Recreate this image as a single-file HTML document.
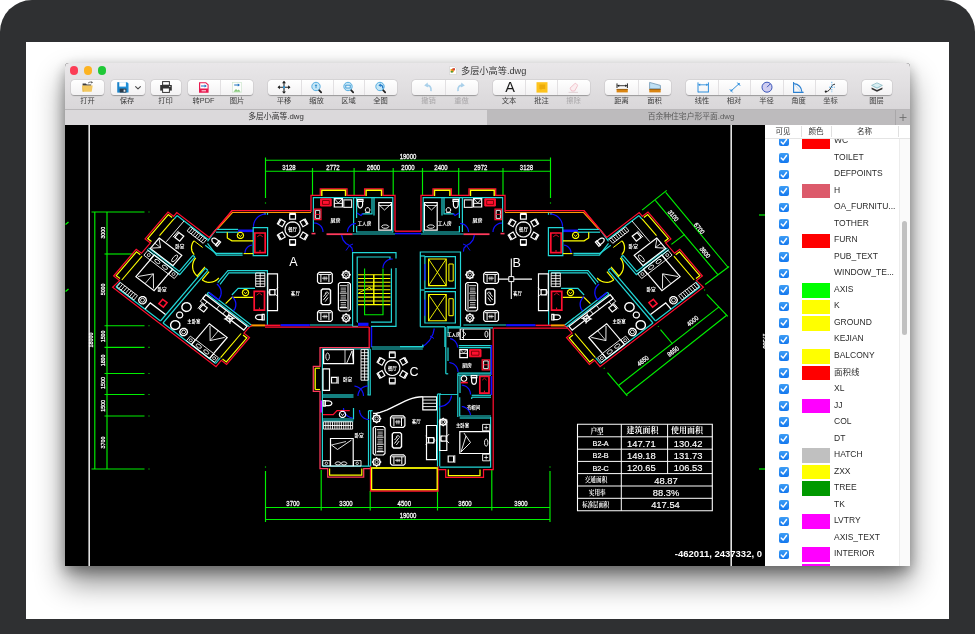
<!DOCTYPE html>
<html lang="zh"><head><meta charset="utf-8"><title>多层小高等.dwg</title>
<style>
html,body{margin:0;padding:0;}
body{width:975px;height:634px;overflow:hidden;background:#fff;position:relative;font-family:"Liberation Sans","Noto Sans CJK SC",sans-serif;}
#frame{position:absolute;left:0;top:0;width:975px;height:680px;background:#2f3032;border-radius:32px 32px 0 0;}
#screen{position:absolute;left:26px;top:42px;width:923px;height:577px;background:#fff;overflow:hidden;}
#win{position:absolute;left:39px;top:21px;width:845px;height:503px;background:#000;box-shadow:0 16px 30px rgba(0,0,0,.48),0 5px 14px rgba(0,0,0,.33);border-radius:4px 4px 0 0;}
#tbar{position:absolute;left:0;top:0;width:845px;height:46.5px;background:linear-gradient(#e9e7e9,#d9d7d9);border-radius:4px 4px 0 0;border-bottom:1px solid #b9b7b9;box-sizing:border-box;}
.tl{position:absolute;top:3.1px;width:8.6px;height:8.6px;border-radius:50%;}
#title{position:absolute;left:396px;top:2px;font-size:9.2px;color:#3a3a3a;white-space:nowrap;line-height:12px;}
.grp{position:absolute;top:17.4px;height:15px;background:linear-gradient(#fff,#f3f2f3);border-radius:3.5px;box-shadow:0 0.5px 1px rgba(0,0,0,.28),0 0 0 0.5px rgba(0,0,0,.07);}
.sep{position:absolute;top:0;width:1px;height:15px;background:#e2e0e2;}
.lab{position:absolute;top:32.7px;width:40px;margin-left:-20px;text-align:center;font-size:7.3px;line-height:10px;color:#3c3c3c;white-space:nowrap;}
.lab.dis{color:#a9a7a9;}
.ic{position:absolute;top:17px;width:16px;height:15px;margin-left:-8px;}
#tabs{position:absolute;left:0;top:46.5px;width:845px;height:14.9px;background:#bdbbbd;font-size:7.8px;line-height:14.5px;color:#333;}
#tab1{position:absolute;left:0;top:0;width:422px;height:15px;background:#dbd9db;text-align:center;}
#tab2{position:absolute;left:423px;top:0;width:406px;height:15px;text-align:center;color:#5a5a5a;}
#plus{position:absolute;left:830px;top:0;width:15px;height:15px;border-left:1px solid #a9a7a9;box-sizing:border-box;}
#canvas{position:absolute;left:0;top:61px;width:700px;height:442px;background:#000;overflow:hidden;}
#panel{position:absolute;left:700px;top:61px;width:145px;height:442px;background:#fff;overflow:hidden;}
#phead{position:absolute;left:0;top:0;width:145px;height:15px;background:#fff;border-bottom:1px solid #e4e4e4;box-sizing:border-box;font-size:7.5px;line-height:15px;color:#333;z-index:3;}
#phead span{position:absolute;top:0;text-align:center;}
.vs{position:absolute;top:2px;width:1px;height:11px;background:#e0e0e0;}
.row{position:absolute;left:0;width:145px;height:16.5px;}
.cb{position:absolute;left:14px;top:4.4px;width:9.6px;height:9.6px;border-radius:2px;background:linear-gradient(#3d9df5,#1478ee);}
.cb svg{position:absolute;left:0;top:0;width:9.6px;height:9.6px;}
.sw{position:absolute;left:37px;top:2.2px;width:28px;height:14.5px;}
.nm{position:absolute;left:69px;top:0;font-size:8.5px;line-height:16.5px;color:#2b2b2b;white-space:nowrap;}
#sb{position:absolute;left:136.8px;top:97.3px;width:5.5px;height:113.7px;border-radius:3px;background:#c1c1c1;z-index:4;}
#trk{position:absolute;left:134.4px;top:15px;width:10.6px;height:427px;background:#fafafa;border-left:1px solid #ececec;box-sizing:border-box;z-index:2;}
#coord{position:absolute;right:3px;top:424px;font-size:9.5px;font-weight:bold;color:#fff;white-space:nowrap;line-height:12px;}
.ic2{position:absolute;top:17.4px;width:20px;height:15px;}
#win,#tbar,#tabs,#panel,#canvas{will-change:transform;}

</style></head>
<body>
<div id="frame"></div>
<div id="screen">
<div id="win">
 <div id="canvas">
<svg id="cad" width="700" height="442" viewBox="65 124 700 442" style="position:absolute;left:0;top:0" fill="none" stroke-linecap="butt" stroke-linejoin="miter">
<path d="M89.2 124.0 L89.2 566.0" stroke="#e2e2e2" stroke-width="1.6" fill="none"/>
<path d="M731.2 124.0 L731.2 566.0" stroke="#e2e2e2" stroke-width="1.6" fill="none"/>
<path d="M65.5 224.5 L68.5 222.0" stroke="#00f000" stroke-width="1.4" fill="none"/>
<path d="M65.5 291.5 L68.5 289.0" stroke="#00f000" stroke-width="1.4" fill="none"/>
<path d="M759.0 215.0 L765.0 215.0" stroke="#00f000" stroke-width="1.2" fill="none"/>
<path d="M759.0 469.0 L765.0 469.0" stroke="#00f000" stroke-width="1.2" fill="none"/>
<text transform="translate(762.6 341.0) rotate(90)" font-size="5.4" fill="#ffffff" text-anchor="middle" font-family='"Liberation Sans","Noto Sans CJK SC",sans-serif' stroke="#ffffff" stroke-width="0.2">17500</text>
<path d="M265.5 160.2 L550.5 160.2" stroke="#00f000" stroke-width="1.15" fill="none"/>
<path d="M265.5 171.2 L550.5 171.2" stroke="#00f000" stroke-width="1.15" fill="none"/>
<path d="M265.5 157.5 L265.5 198.0" stroke="#00f000" stroke-width="1.15" fill="none"/>
<path d="M265.5 202.5 L265.5 203.5" stroke="#00f000" stroke-width="1.15" fill="none"/>
<path d="M550.5 157.5 L550.5 198.0" stroke="#00f000" stroke-width="1.15" fill="none"/>
<path d="M550.5 202.5 L550.5 203.5" stroke="#00f000" stroke-width="1.15" fill="none"/>
<path d="M312.5 168.0 L312.5 195.0" stroke="#00f000" stroke-width="1.15" fill="none"/>
<path d="M354.1 168.0 L354.1 195.0" stroke="#00f000" stroke-width="1.15" fill="none"/>
<path d="M393.2 168.0 L393.2 195.0" stroke="#00f000" stroke-width="1.15" fill="none"/>
<path d="M422.5 168.0 L422.5 195.0" stroke="#00f000" stroke-width="1.15" fill="none"/>
<path d="M458.7 168.0 L458.7 195.0" stroke="#00f000" stroke-width="1.15" fill="none"/>
<path d="M503.0 168.0 L503.0 195.0" stroke="#00f000" stroke-width="1.15" fill="none"/>
<text transform="translate(289.0 169.8) scale(0.86 1)" font-size="7.0" fill="#ffffff" text-anchor="middle" font-family='"Liberation Sans","Noto Sans CJK SC",sans-serif' stroke="#ffffff" stroke-width="0.25">3128</text>
<text transform="translate(333.0 169.8) scale(0.86 1)" font-size="7.0" fill="#ffffff" text-anchor="middle" font-family='"Liberation Sans","Noto Sans CJK SC",sans-serif' stroke="#ffffff" stroke-width="0.25">2772</text>
<text transform="translate(373.5 169.8) scale(0.86 1)" font-size="7.0" fill="#ffffff" text-anchor="middle" font-family='"Liberation Sans","Noto Sans CJK SC",sans-serif' stroke="#ffffff" stroke-width="0.25">2600</text>
<text transform="translate(408.0 169.8) scale(0.86 1)" font-size="7.0" fill="#ffffff" text-anchor="middle" font-family='"Liberation Sans","Noto Sans CJK SC",sans-serif' stroke="#ffffff" stroke-width="0.25">2000</text>
<text transform="translate(441.0 169.8) scale(0.86 1)" font-size="7.0" fill="#ffffff" text-anchor="middle" font-family='"Liberation Sans","Noto Sans CJK SC",sans-serif' stroke="#ffffff" stroke-width="0.25">2400</text>
<text transform="translate(480.7 169.8) scale(0.86 1)" font-size="7.0" fill="#ffffff" text-anchor="middle" font-family='"Liberation Sans","Noto Sans CJK SC",sans-serif' stroke="#ffffff" stroke-width="0.25">2972</text>
<text transform="translate(526.5 169.8) scale(0.86 1)" font-size="7.0" fill="#ffffff" text-anchor="middle" font-family='"Liberation Sans","Noto Sans CJK SC",sans-serif' stroke="#ffffff" stroke-width="0.25">3128</text>
<text transform="translate(408.0 158.6) scale(0.86 1)" font-size="7.0" fill="#ffffff" text-anchor="middle" font-family='"Liberation Sans","Noto Sans CJK SC",sans-serif' stroke="#ffffff" stroke-width="0.25">19000</text>
<path d="M265.5 507.5 L550.0 507.5" stroke="#00f000" stroke-width="1.15" fill="none"/>
<path d="M265.5 519.5 L550.0 519.5" stroke="#00f000" stroke-width="1.15" fill="none"/>
<path d="M265.5 471.0 L265.5 522.0" stroke="#00f000" stroke-width="1.15" fill="none"/>
<path d="M265.5 466.5 L265.5 467.5" stroke="#00f000" stroke-width="1.15" fill="none"/>
<path d="M550.0 471.0 L550.0 522.0" stroke="#00f000" stroke-width="1.15" fill="none"/>
<path d="M550.0 466.5 L550.0 467.5" stroke="#00f000" stroke-width="1.15" fill="none"/>
<path d="M321.2 470.0 L321.2 510.5" stroke="#00f000" stroke-width="1.15" fill="none"/>
<path d="M370.2 491.0 L370.2 510.5" stroke="#00f000" stroke-width="1.15" fill="none"/>
<path d="M437.5 491.0 L437.5 510.5" stroke="#00f000" stroke-width="1.15" fill="none"/>
<path d="M491.8 470.0 L491.8 510.5" stroke="#00f000" stroke-width="1.15" fill="none"/>
<text transform="translate(293.0 505.8) scale(0.86 1)" font-size="7.0" fill="#ffffff" text-anchor="middle" font-family='"Liberation Sans","Noto Sans CJK SC",sans-serif' stroke="#ffffff" stroke-width="0.25">3700</text>
<text transform="translate(346.0 505.8) scale(0.86 1)" font-size="7.0" fill="#ffffff" text-anchor="middle" font-family='"Liberation Sans","Noto Sans CJK SC",sans-serif' stroke="#ffffff" stroke-width="0.25">3300</text>
<text transform="translate(404.3 505.8) scale(0.86 1)" font-size="7.0" fill="#ffffff" text-anchor="middle" font-family='"Liberation Sans","Noto Sans CJK SC",sans-serif' stroke="#ffffff" stroke-width="0.25">4500</text>
<text transform="translate(465.0 505.8) scale(0.86 1)" font-size="7.0" fill="#ffffff" text-anchor="middle" font-family='"Liberation Sans","Noto Sans CJK SC",sans-serif' stroke="#ffffff" stroke-width="0.25">3600</text>
<text transform="translate(521.0 505.8) scale(0.86 1)" font-size="7.0" fill="#ffffff" text-anchor="middle" font-family='"Liberation Sans","Noto Sans CJK SC",sans-serif' stroke="#ffffff" stroke-width="0.25">3900</text>
<text transform="translate(408.0 517.6) scale(0.86 1)" font-size="7.0" fill="#ffffff" text-anchor="middle" font-family='"Liberation Sans","Noto Sans CJK SC",sans-serif' stroke="#ffffff" stroke-width="0.25">19000</text>
<path d="M94.8 212.0 L94.8 469.0" stroke="#00f000" stroke-width="1.15" fill="none"/>
<path d="M107.0 212.0 L107.0 469.0" stroke="#00f000" stroke-width="1.15" fill="none"/>
<path d="M91.5 212.0 L144.5 212.0" stroke="#00f000" stroke-width="1.15" fill="none"/>
<path d="M148.5 212.0 L149.5 212.0" stroke="#00f000" stroke-width="1.15" fill="none"/>
<path d="M104.5 254.0 L133.5 254.0" stroke="#00f000" stroke-width="1.15" fill="none"/>
<path d="M104.5 325.7 L144.5 325.7" stroke="#00f000" stroke-width="1.15" fill="none"/>
<path d="M148.5 325.7 L149.5 325.7" stroke="#00f000" stroke-width="1.15" fill="none"/>
<path d="M104.5 347.3 L144.5 347.3" stroke="#00f000" stroke-width="1.15" fill="none"/>
<path d="M148.5 347.3 L149.5 347.3" stroke="#00f000" stroke-width="1.15" fill="none"/>
<path d="M104.5 373.5 L144.5 373.5" stroke="#00f000" stroke-width="1.15" fill="none"/>
<path d="M148.5 373.5 L149.5 373.5" stroke="#00f000" stroke-width="1.15" fill="none"/>
<path d="M104.5 394.5 L144.5 394.5" stroke="#00f000" stroke-width="1.15" fill="none"/>
<path d="M148.5 394.5 L149.5 394.5" stroke="#00f000" stroke-width="1.15" fill="none"/>
<path d="M104.5 416.0 L144.5 416.0" stroke="#00f000" stroke-width="1.15" fill="none"/>
<path d="M148.5 416.0 L149.5 416.0" stroke="#00f000" stroke-width="1.15" fill="none"/>
<path d="M91.5 469.0 L144.5 469.0" stroke="#00f000" stroke-width="1.15" fill="none"/>
<path d="M148.5 469.0 L149.5 469.0" stroke="#00f000" stroke-width="1.15" fill="none"/>
<text transform="translate(105.2 232.7) rotate(-90) scale(0.86 1)" font-size="6.2" fill="#ffffff" text-anchor="middle" font-family='"Liberation Sans","Noto Sans CJK SC",sans-serif' stroke="#ffffff" stroke-width="0.25">3000</text>
<text transform="translate(105.2 289.4) rotate(-90) scale(0.86 1)" font-size="6.2" fill="#ffffff" text-anchor="middle" font-family='"Liberation Sans","Noto Sans CJK SC",sans-serif' stroke="#ffffff" stroke-width="0.25">5000</text>
<text transform="translate(105.2 336.4) rotate(-90) scale(0.86 1)" font-size="6.2" fill="#ffffff" text-anchor="middle" font-family='"Liberation Sans","Noto Sans CJK SC",sans-serif' stroke="#ffffff" stroke-width="0.25">1500</text>
<text transform="translate(105.2 360.4) rotate(-90) scale(0.86 1)" font-size="6.2" fill="#ffffff" text-anchor="middle" font-family='"Liberation Sans","Noto Sans CJK SC",sans-serif' stroke="#ffffff" stroke-width="0.25">1800</text>
<text transform="translate(105.2 383.0) rotate(-90) scale(0.86 1)" font-size="6.2" fill="#ffffff" text-anchor="middle" font-family='"Liberation Sans","Noto Sans CJK SC",sans-serif' stroke="#ffffff" stroke-width="0.25">1500</text>
<text transform="translate(105.2 405.9) rotate(-90) scale(0.86 1)" font-size="6.2" fill="#ffffff" text-anchor="middle" font-family='"Liberation Sans","Noto Sans CJK SC",sans-serif' stroke="#ffffff" stroke-width="0.25">1500</text>
<text transform="translate(105.2 442.5) rotate(-90) scale(0.86 1)" font-size="6.2" fill="#ffffff" text-anchor="middle" font-family='"Liberation Sans","Noto Sans CJK SC",sans-serif' stroke="#ffffff" stroke-width="0.25">3700</text>
<text transform="translate(93.0 340.0) rotate(-90) scale(0.86 1)" font-size="6.2" fill="#ffffff" text-anchor="middle" font-family='"Liberation Sans","Noto Sans CJK SC",sans-serif' stroke="#ffffff" stroke-width="0.25">18000</text>
<path d="M642.1 210.1 L666.7 190.4" stroke="#00f000" stroke-width="1.15" fill="none"/>
<path d="M655.3 200.3 L717.8 274.7" stroke="#00f000" stroke-width="1.15" fill="none"/>
<path d="M665.7 192.3 L728.2 267.5" stroke="#00f000" stroke-width="1.15" fill="none"/>
<path d="M671.4 244.4 L684.6 234.4" stroke="#00f000" stroke-width="1.15" fill="none"/>
<path d="M705.1 284.5 L729.1 266.5" stroke="#00f000" stroke-width="1.15" fill="none"/>
<text transform="translate(671.4 217.0) rotate(50) scale(0.86 1)" font-size="6.6" fill="#ffffff" text-anchor="middle" font-family='"Liberation Sans","Noto Sans CJK SC",sans-serif' stroke="#ffffff" stroke-width="0.25">3100</text>
<text transform="translate(697.5 229.9) rotate(50) scale(0.86 1)" font-size="6.6" fill="#ffffff" text-anchor="middle" font-family='"Liberation Sans","Noto Sans CJK SC",sans-serif' stroke="#ffffff" stroke-width="0.25">6700</text>
<text transform="translate(703.2 253.9) rotate(50) scale(0.86 1)" font-size="6.6" fill="#ffffff" text-anchor="middle" font-family='"Liberation Sans","Noto Sans CJK SC",sans-serif' stroke="#ffffff" stroke-width="0.25">3600</text>
<path d="M706.8 294.4 L727.8 316.4" stroke="#00f000" stroke-width="1.15" fill="none"/>
<path d="M704.3 289.7 L704.9 290.3" stroke="#00f000" stroke-width="1.15" fill="none"/>
<path d="M719.0 306.9 L618.5 385.5" stroke="#00f000" stroke-width="1.15" fill="none"/>
<path d="M726.7 315.3 L626.2 394.8" stroke="#00f000" stroke-width="1.15" fill="none"/>
<path d="M660.5 329.7 L672.6 344.0" stroke="#00f000" stroke-width="1.15" fill="none"/>
<path d="M658.0 326.1 L658.6 326.7" stroke="#00f000" stroke-width="1.15" fill="none"/>
<path d="M607.5 372.7 L627.3 395.9" stroke="#00f000" stroke-width="1.15" fill="none"/>
<path d="M603.9 368.0 L604.5 368.6" stroke="#00f000" stroke-width="1.15" fill="none"/>
<text transform="translate(694.0 322.8) rotate(-38) scale(0.86 1)" font-size="6.6" fill="#ffffff" text-anchor="middle" font-family='"Liberation Sans","Noto Sans CJK SC",sans-serif' stroke="#ffffff" stroke-width="0.25">4000</text>
<text transform="translate(644.3 362.6) rotate(-38) scale(0.86 1)" font-size="6.6" fill="#ffffff" text-anchor="middle" font-family='"Liberation Sans","Noto Sans CJK SC",sans-serif' stroke="#ffffff" stroke-width="0.25">4650</text>
<text transform="translate(674.5 353.1) rotate(-38) scale(0.86 1)" font-size="6.6" fill="#ffffff" text-anchor="middle" font-family='"Liberation Sans","Noto Sans CJK SC",sans-serif' stroke="#ffffff" stroke-width="0.25">8650</text>
<path d="M577.5 424.3 L712.3 424.3 L712.3 510.8 L577.5 510.8 Z" stroke="#ffffff" stroke-width="1.1" fill="none"/>
<path d="M577.5 436.8 L712.3 436.8" stroke="#ffffff" stroke-width="1.0" fill="none"/>
<path d="M577.5 449.2 L712.3 449.2" stroke="#ffffff" stroke-width="1.0" fill="none"/>
<path d="M577.5 461.4 L712.3 461.4" stroke="#ffffff" stroke-width="1.0" fill="none"/>
<path d="M577.5 473.6 L712.3 473.6" stroke="#ffffff" stroke-width="1.0" fill="none"/>
<path d="M577.5 486.0 L712.3 486.0" stroke="#ffffff" stroke-width="1.0" fill="none"/>
<path d="M577.5 498.3 L712.3 498.3" stroke="#ffffff" stroke-width="1.0" fill="none"/>
<path d="M621.3 424.3 L621.3 510.8" stroke="#ffffff" stroke-width="1.0" fill="none"/>
<path d="M667.6 424.3 L667.6 473.6" stroke="#ffffff" stroke-width="1.0" fill="none"/>
<text transform="translate(597.0 433.5) scale(0.8 1)" font-size="8.2" fill="#ffffff" text-anchor="middle" font-family='"Noto Serif CJK SC","Noto Sans CJK SC",serif' font-weight="bold">户型</text>
<text transform="translate(642.5 433.4)" font-size="8" fill="#ffffff" text-anchor="middle" font-family='"Noto Serif CJK SC","Noto Sans CJK SC",serif' font-weight="bold">建筑面积</text>
<text transform="translate(687.0 433.4)" font-size="8" fill="#ffffff" text-anchor="middle" font-family='"Noto Serif CJK SC","Noto Sans CJK SC",serif' font-weight="bold">使用面积</text>
<text transform="translate(600.6 446.0)" font-size="7.2" fill="#ffffff" text-anchor="middle" font-family='"Liberation Sans","Noto Sans CJK SC",sans-serif' stroke="#ffffff" stroke-width="0.2">B2-A</text>
<text transform="translate(641.3 446.8)" font-size="9.4" fill="#ffffff" text-anchor="middle" font-family='"Liberation Sans","Noto Sans CJK SC",sans-serif' stroke="#ffffff" stroke-width="0.15">147.71</text>
<text transform="translate(688.2 446.8)" font-size="9.4" fill="#ffffff" text-anchor="middle" font-family='"Liberation Sans","Noto Sans CJK SC",sans-serif' stroke="#ffffff" stroke-width="0.15">130.42</text>
<text transform="translate(600.6 458.3)" font-size="7.2" fill="#ffffff" text-anchor="middle" font-family='"Liberation Sans","Noto Sans CJK SC",sans-serif' stroke="#ffffff" stroke-width="0.2">B2-B</text>
<text transform="translate(641.3 459.1)" font-size="9.4" fill="#ffffff" text-anchor="middle" font-family='"Liberation Sans","Noto Sans CJK SC",sans-serif' stroke="#ffffff" stroke-width="0.15">149.18</text>
<text transform="translate(688.2 459.1)" font-size="9.4" fill="#ffffff" text-anchor="middle" font-family='"Liberation Sans","Noto Sans CJK SC",sans-serif' stroke="#ffffff" stroke-width="0.15">131.73</text>
<text transform="translate(600.6 470.5)" font-size="7.2" fill="#ffffff" text-anchor="middle" font-family='"Liberation Sans","Noto Sans CJK SC",sans-serif' stroke="#ffffff" stroke-width="0.2">B2-C</text>
<text transform="translate(641.3 471.3)" font-size="9.4" fill="#ffffff" text-anchor="middle" font-family='"Liberation Sans","Noto Sans CJK SC",sans-serif' stroke="#ffffff" stroke-width="0.15">120.65</text>
<text transform="translate(688.2 471.3)" font-size="9.4" fill="#ffffff" text-anchor="middle" font-family='"Liberation Sans","Noto Sans CJK SC",sans-serif' stroke="#ffffff" stroke-width="0.15">106.53</text>
<text transform="translate(596.0 482.3) scale(0.81 1)" font-size="7" fill="#ffffff" text-anchor="middle" font-family='"Noto Serif CJK SC","Noto Sans CJK SC",serif' font-weight="bold">交通面积</text>
<text transform="translate(597.2 494.7) scale(0.8 1)" font-size="7" fill="#ffffff" text-anchor="middle" font-family='"Noto Serif CJK SC","Noto Sans CJK SC",serif' font-weight="bold">实用率</text>
<text transform="translate(595.8 507.1) scale(0.77 1)" font-size="7" fill="#ffffff" text-anchor="middle" font-family='"Noto Serif CJK SC","Noto Sans CJK SC",serif' font-weight="bold">标准层面积</text>
<text transform="translate(666.0 483.6)" font-size="9.4" fill="#ffffff" text-anchor="middle" font-family='"Liberation Sans","Noto Sans CJK SC",sans-serif' stroke="#ffffff" stroke-width="0.15">48.87</text>
<text transform="translate(666.0 495.9)" font-size="9.4" fill="#ffffff" text-anchor="middle" font-family='"Liberation Sans","Noto Sans CJK SC",sans-serif' stroke="#ffffff" stroke-width="0.15">88.3%</text>
<text transform="translate(665.5 508.3)" font-size="9.4" fill="#ffffff" text-anchor="middle" font-family='"Liberation Sans","Noto Sans CJK SC",sans-serif' stroke="#ffffff" stroke-width="0.15">417.54</text>
<path d="M311.0 212.0 L311.0 195.3 L320.3 195.3 L320.3 188.8 L347.0 188.8 L347.0 195.3 L364.6 195.3 L364.6 188.8 L383.0 188.8 L383.0 195.3 L395.0 195.3 L395.0 231.2" stroke="#ff1030" stroke-width="1.3" fill="none"/>
<path d="M321.8 196.0 L321.8 190.3 L345.5 190.3 L345.5 196.0" stroke="#ffff00" stroke-width="1.4" fill="none"/>
<path d="M366.1 196.0 L366.1 190.3 L381.5 190.3 L381.5 196.0" stroke="#ffff00" stroke-width="1.4" fill="none"/>
<path d="M313.4 232.0 L313.4 197.6 L392.8 197.6 L392.8 232.4" stroke="#22d6d6" stroke-width="1.2" fill="none"/>
<path d="M326.5 234.2 L352.6 234.2" stroke="#ff3a5c" stroke-width="1.8" fill="none"/>
<path d="M311.5 233.6 L315.5 233.6" stroke="#ff3a5c" stroke-width="1.6" fill="none"/>
<path d="M352.6 234.0 L395.0 234.0" stroke="#22d6d6" stroke-width="1.2" fill="none"/>
<path d="M356.0 232.0 L392.8 232.0" stroke="#22d6d6" stroke-width="1.2" fill="none"/>
<path d="M353.6 197.6 L353.6 232.0" stroke="#22d6d6" stroke-width="1.2" fill="none"/>
<path d="M356.6 197.6 L356.6 218.0" stroke="#22d6d6" stroke-width="1.2" fill="none"/>
<path d="M356.6 226.0 L356.6 232.0" stroke="#22d6d6" stroke-width="1.2" fill="none"/>
<path d="M320.6 198.8 L331.2 198.8 L331.2 206.0 L320.6 206.0 Z" stroke="#ff1030" stroke-width="1" fill="#ff1030"/>
<path d="M322.5 200.5 L329.3 200.5 L329.3 204.4 L322.5 204.4 Z" stroke="#600" stroke-width="0.8" fill="none"/>
<path d="M334.3 198.6 L342.4 198.6 L342.4 207.0 L334.3 207.0 Z" stroke="#ffffff" stroke-width="1.2" fill="none"/>
<path d="M334.3 198.6 L338.3 203.0 L342.4 198.6" stroke="#ffffff" stroke-width="0.9" fill="none"/>
<path d="M334.3 203.4 L342.4 203.4" stroke="#ffffff" stroke-width="0.9" fill="none"/>
<path d="M343.8 199.8 L351.6 199.8 L351.6 207.4 L343.8 207.4 Z" stroke="#ffffff" stroke-width="1.2" fill="none" opacity="0.85"/>
<path d="M314.3 209.2 L321.0 209.2 L321.0 219.6 L314.3 219.6 Z" stroke="#ff1030" stroke-width="1.2" fill="none"/>
<path d="M315.6 210.4 L319.8 210.4 L319.8 218.4 L315.6 218.4 Z" stroke="#ffffff" stroke-width="0.9" fill="none"/>
<path d="M315.6 214.4 L319.8 214.4" stroke="#ff1030" stroke-width="1.0" fill="none"/>
<text transform="translate(335.6 222.2)" font-size="5" fill="#ffffff" text-anchor="middle" font-family='"Liberation Sans","Noto Sans CJK SC",sans-serif' font-weight="bold">厨房</text>
<path d="M363.0 199.3 L363.0 201.3 L357.4 201.3 L357.4 199.3 Z" stroke="#ffffff" stroke-width="1.2" fill="none"/>
<path d="M362.6 201.3 L362.6 204.6 L362.3 206.3 L361.4 207.5 L360.2 208.0 L359.0 207.5 L358.1 206.3 L357.8 204.6 L357.8 201.3 Z" stroke="#ffffff" stroke-width="1.2" fill="none"/>
<path d="M372.0 197.6 L372.0 213.8 L361.8 213.8" stroke="#22d6d6" stroke-width="1.2" fill="none"/>
<path d="M374.0 197.6 L374.0 215.6" stroke="#22d6d6" stroke-width="1.2" fill="none"/>
<path d="M370.0 210.0 L369.5 211.4 L368.3 212.3 L366.9 212.3 L365.7 211.4 L365.2 210.0 L365.7 208.6 L366.9 207.7 L368.3 207.7 L369.5 208.6 Z" stroke="#ffffff" stroke-width="1.0" fill="none"/>
<path d="M365.0 212.4 L370.0 212.4" stroke="#ffffff" stroke-width="0.8" fill="none"/>
<path d="M378.8 202.6 L391.6 202.6 L391.6 230.2 L378.8 230.2 Z" stroke="#ffffff" stroke-width="1.2" fill="none"/>
<path d="M378.8 204.6 L384.5 210.0 L391.6 203.6" stroke="#ffffff" stroke-width="0.9" fill="none"/>
<path d="M379.0 205.5 L391.4 205.5" stroke="#ffffff" stroke-width="0.8" fill="none"/>
<path d="M388.8 226.6 L388.3 227.4 L387.0 228.1 L385.2 228.3 L383.4 228.1 L382.1 227.4 L381.6 226.6 L382.1 225.8 L383.4 225.1 L385.2 224.9 L387.0 225.1 L388.3 225.8 Z" stroke="#ffffff" stroke-width="0.9" fill="none"/>
<text transform="translate(364.4 225.0)" font-size="4.6" fill="#ffffff" text-anchor="middle" font-family='"Liberation Sans","Noto Sans CJK SC",sans-serif' font-weight="bold">工人房</text>
<path d="M314.0 223.0 L315.4 223.1 L316.8 223.4 L318.1 224.0 L319.3 224.7 L320.4 225.6 L321.3 226.7 L322.0 227.9 L322.6 229.2 L322.9 230.6 L323.0 232.0" stroke="#1010ff" stroke-width="1.2" fill="none"/>
<path d="M347.5 232.0 L347.6 230.7 L347.9 229.4 L348.4 228.1 L349.1 227.0 L350.0 226.0 L351.0 225.1 L352.1 224.4 L353.4 223.9 L354.7 223.6 L356.0 223.5" stroke="#1010ff" stroke-width="1.2" fill="none"/>
<path d="M357.0 213.0 L361.0 215.5 L363.0 213.5" stroke="#1010ff" stroke-width="1.1" fill="none"/>
<path d="M341.6 235.2 L343.0 240.0 L346.0 243.5 L349.5 245.5" stroke="#1010ff" stroke-width="1.2" fill="none"/>
<path d="M349.5 245.5 L352.0 248.0 L352.6 251.6" stroke="#1010ff" stroke-width="1.2" fill="none"/>
<path d="M346.0 250.5 L349.5 245.5 L353.0 244.0" stroke="#1010ff" stroke-width="1.0" fill="none"/>
<path d="M209.2 237.9 L231.9 210.7 L311.0 210.7" stroke="#ff1030" stroke-width="1.3" fill="none"/>
<path d="M217.7 228.8 L232.4 212.5 L311.0 212.5" stroke="#ff9a00" stroke-width="1.2" fill="none"/>
<path d="M265.0 212.8 L265.0 214.8" stroke="#22d6d6" stroke-width="1.2" fill="none"/>
<path d="M267.5 212.8 L267.5 214.8" stroke="#22d6d6" stroke-width="1.2" fill="none"/>
<path d="M253.5 226.5 L253.6 224.6 L254.1 222.7 L254.8 220.9 L255.8 219.3 L257.0 217.8 L258.4 216.5 L260.1 215.5 L261.8 214.7 L263.7 214.2 L265.6 214.0" stroke="#1010ff" stroke-width="1.2" fill="none"/>
<path d="M253.5 226.5 L253.5 228.0" stroke="#1010ff" stroke-width="1.1" fill="none"/>
<path d="M300.2 229.4 L299.8 231.7 L298.7 233.9 L297.1 235.5 L294.9 236.6 L292.6 237.0 L290.3 236.6 L288.1 235.5 L286.5 233.9 L285.4 231.7 L285.0 229.4 L285.4 227.1 L286.5 224.9 L288.1 223.3 L290.3 222.2 L292.6 221.8 L294.9 222.2 L297.1 223.3 L298.7 224.9 L299.8 227.1 Z" stroke="#ffffff" stroke-width="1.2" fill="none"/>
<path d="M289.7 219.2 L289.7 214.4 L295.5 214.4 L295.5 219.2 Z" stroke="#ffffff" stroke-width="1.2" fill="none"/>
<path d="M289.4 213.4 L295.8 213.4" stroke="#ffffff" stroke-width="1.2" fill="none"/>
<path d="M300.0 221.8 L304.1 219.4 L307.0 224.4 L302.9 226.8 Z" stroke="#ffffff" stroke-width="1.2" fill="none"/>
<path d="M304.9 218.6 L308.1 224.2" stroke="#ffffff" stroke-width="1.2" fill="none"/>
<path d="M302.9 232.0 L307.0 234.4 L304.1 239.4 L300.0 237.0 Z" stroke="#ffffff" stroke-width="1.2" fill="none"/>
<path d="M308.1 234.6 L304.9 240.2" stroke="#ffffff" stroke-width="1.2" fill="none"/>
<path d="M295.5 239.6 L295.5 244.4 L289.7 244.4 L289.7 239.6 Z" stroke="#ffffff" stroke-width="1.2" fill="none"/>
<path d="M295.8 245.4 L289.4 245.4" stroke="#ffffff" stroke-width="1.2" fill="none"/>
<path d="M285.2 237.0 L281.1 239.4 L278.2 234.4 L282.3 232.0 Z" stroke="#ffffff" stroke-width="1.2" fill="none"/>
<path d="M280.3 240.2 L277.1 234.6" stroke="#ffffff" stroke-width="1.2" fill="none"/>
<path d="M282.3 226.8 L278.2 224.4 L281.1 219.4 L285.2 221.8 Z" stroke="#ffffff" stroke-width="1.2" fill="none"/>
<path d="M277.1 224.2 L280.3 218.6" stroke="#ffffff" stroke-width="1.2" fill="none"/>
<text transform="translate(292.6 231.2)" font-size="4.6" fill="#ffffff" text-anchor="middle" font-family='"Liberation Sans","Noto Sans CJK SC",sans-serif' font-weight="bold">餐厅</text>
<path d="M216.0 229.4 L238.1 229.4" stroke="#22d6d6" stroke-width="1.2" fill="none"/>
<path d="M216.0 232.2 L238.1 232.2" stroke="#22d6d6" stroke-width="1.2" fill="none"/>
<path d="M238.0 230.8 L253.4 230.8" stroke="#1010ff" stroke-width="2.6" fill="none"/>
<path d="M253.2 227.7 L267.6 227.7 L267.6 255.6 L253.2 255.6 Z" stroke="#22d6d6" stroke-width="1.2" fill="none"/>
<path d="M205.2 245.3 L216.0 253.3 L242.6 253.3" stroke="#22d6d6" stroke-width="1.2" fill="none"/>
<path d="M207.5 243.3 L216.6 255.2 L242.6 255.2" stroke="#22d6d6" stroke-width="1.2" fill="none"/>
<path d="M216.0 229.4 L207.5 241.3" stroke="#22d6d6" stroke-width="1.2" fill="none"/>
<path d="M227.3 232.2 L227.3 238.0 L231.9 240.8 L253.0 240.8" stroke="#ffff00" stroke-width="1.2" fill="none"/>
<path d="M243.6 235.4 L243.0 237.3 L241.4 238.4 L239.4 238.4 L237.8 237.3 L237.2 235.4 L237.8 233.5 L239.4 232.4 L241.4 232.4 L243.0 233.5 Z" stroke="#ffff00" stroke-width="1.1" fill="none"/>
<path d="M238.5 234.4 L240.4 236.6 L242.3 234.4" stroke="#ffff00" stroke-width="0.9" fill="none"/>
<path d="M254.8 233.0 L265.2 233.0 L265.2 252.6 L254.8 252.6 Z" stroke="#ff1030" stroke-width="1.7" fill="none"/>
<path d="M257.2 236.8 L260.0 234.8 L262.8 236.8" stroke="#ff1030" stroke-width="0.8" fill="none"/>
<path d="M260.0 250.0 L260.0 251.8" stroke="#ff1030" stroke-width="1.0" fill="none"/>
<path d="M245.0 253.0 L245.1 251.9 L245.3 250.7 L245.7 249.7 L246.3 248.7 L247.0 247.8 L247.8 246.9 L248.7 246.3 L249.7 245.7 L250.8 245.3 L251.9 245.1" stroke="#1010ff" stroke-width="1.2" fill="none"/>
<path d="M243.6 253.6 L253.0 253.6" stroke="#ffff00" stroke-width="1.1" fill="none"/>
<path d="M217.0 246.3 L215.5 245.1 L219.1 240.8 L220.6 242.0 Z" stroke="#ffffff" stroke-width="1.2" fill="none"/>
<path d="M215.8 244.7 L213.2 242.6 L212.1 241.3 L211.8 239.8 L212.2 238.6 L213.3 238.0 L214.8 238.1 L216.3 238.9 L218.9 241.1 Z" stroke="#ffffff" stroke-width="1.2" fill="none"/>
<path d="M217.7 282.6 L227.9 270.7 L267.4 270.7 L267.4 325.0" stroke="#22d6d6" stroke-width="1.2" fill="none"/>
<path d="M220.0 284.4 L228.8 272.8 L265.2 272.8" stroke="#22d6d6" stroke-width="1.2" fill="none"/>
<path d="M231.9 295.0 L238.1 288.3 L255.0 288.3" stroke="#22d6d6" stroke-width="1.2" fill="none"/>
<path d="M225.6 303.6 L232.0 297.3 L253.4 297.3" stroke="#ffff00" stroke-width="1.2" fill="none"/>
<path d="M248.7 292.6 L248.1 294.5 L246.5 295.6 L244.5 295.6 L242.9 294.5 L242.3 292.6 L242.9 290.7 L244.5 289.6 L246.5 289.6 L248.1 290.7 Z" stroke="#ffff00" stroke-width="1.1" fill="none"/>
<path d="M243.6 291.6 L245.5 293.8 L247.4 291.6" stroke="#ffff00" stroke-width="0.9" fill="none"/>
<path d="M254.2 291.3 L264.5 291.3 L264.5 310.2 L254.2 310.2 Z" stroke="#ff1030" stroke-width="1.7" fill="none"/>
<path d="M256.6 295.1 L259.4 293.1 L262.1 295.1" stroke="#ff1030" stroke-width="0.8" fill="none"/>
<path d="M259.4 307.6 L259.4 309.4" stroke="#ff1030" stroke-width="1.0" fill="none"/>
<path d="M255.7 273.0 L264.8 273.0 L264.8 286.6 L255.7 286.6 Z" stroke="#ffffff" stroke-width="0.9" fill="none"/>
<path d="M255.7 275.7 L264.8 275.7" stroke="#ffffff" stroke-width="0.9" fill="none"/>
<path d="M255.7 278.4 L264.8 278.4" stroke="#ffffff" stroke-width="0.9" fill="none"/>
<path d="M255.7 281.2 L264.8 281.2" stroke="#ffffff" stroke-width="0.9" fill="none"/>
<path d="M255.7 283.9 L264.8 283.9" stroke="#ffffff" stroke-width="0.9" fill="none"/>
<path d="M260.2 273.0 L260.2 286.6" stroke="#ffffff" stroke-width="0.9" fill="none"/>
<path d="M264.2 320.0 L262.2 320.0 L262.2 314.4 L264.2 314.4 Z" stroke="#ffffff" stroke-width="1.2" fill="none"/>
<path d="M262.2 319.6 L258.9 319.6 L257.2 319.3 L256.0 318.4 L255.5 317.2 L256.0 316.0 L257.2 315.1 L258.9 314.8 L262.2 314.8 Z" stroke="#ffffff" stroke-width="1.2" fill="none"/>
<path d="M309.8 325.0 L352.6 325.0" stroke="#22d6d6" stroke-width="1.2" fill="none"/>
<path d="M267.7 273.8 L277.5 273.8 L277.5 310.7 L267.7 310.7 Z" stroke="#ffffff" stroke-width="1.2" fill="none"/>
<path d="M269.7 289.6 L274.9 289.6 L274.9 294.8 L269.7 294.8 Z" stroke="#ffffff" stroke-width="1.2" fill="none"/>
<path d="M274.9 290.7 L277.8 287.7" stroke="#ffffff" stroke-width="0.9" fill="none"/>
<path d="M274.9 293.7 L277.8 296.7" stroke="#ffffff" stroke-width="0.9" fill="none"/>
<path d="M271.3 294.8 L270.0 294.5 L269.0 293.5 L268.7 292.2 L269.0 290.9 L270.0 289.9 L271.3 289.6" stroke="#ffffff" stroke-width="0.8" fill="none"/>
<text transform="translate(295.4 295.4)" font-size="4.6" fill="#ffffff" text-anchor="middle" font-family='"Liberation Sans","Noto Sans CJK SC",sans-serif' font-weight="bold">客厅</text>
<path d="M319.1 272.4 L330.7 272.4 L332.3 274.0 L332.3 281.8 L330.7 283.4 L319.1 283.4 L317.5 281.8 L317.5 274.0 Z" stroke="#ffffff" stroke-width="1.2" fill="none"/>
<path d="M320.9 274.4 L320.9 282.2" stroke="#ffffff" stroke-width="1.0" fill="none"/>
<path d="M328.9 274.4 L328.9 282.2" stroke="#ffffff" stroke-width="1.0" fill="none"/>
<path d="M318.5 274.4 L331.3 274.4" stroke="#ffffff" stroke-width="1.0" fill="none"/>
<path d="M324.1 276.3 L324.1 280.4" stroke="#ffffff" stroke-width="0.8" fill="none"/>
<path d="M326.1 276.3 L326.1 280.4" stroke="#ffffff" stroke-width="0.8" fill="none"/>
<path d="M322.1 278.2 L327.7 278.2" stroke="#ffffff" stroke-width="0.8" fill="none"/>
<path d="M319.1 310.7 L330.7 310.7 L332.3 312.3 L332.3 319.8 L330.7 321.4 L319.1 321.4 L317.5 319.8 L317.5 312.3 Z" stroke="#ffffff" stroke-width="1.2" fill="none"/>
<path d="M320.9 312.7 L320.9 320.2" stroke="#ffffff" stroke-width="1.0" fill="none"/>
<path d="M328.9 312.7 L328.9 320.2" stroke="#ffffff" stroke-width="1.0" fill="none"/>
<path d="M318.5 312.7 L331.3 312.7" stroke="#ffffff" stroke-width="1.0" fill="none"/>
<path d="M324.1 314.6 L324.1 318.4" stroke="#ffffff" stroke-width="0.8" fill="none"/>
<path d="M326.1 314.6 L326.1 318.4" stroke="#ffffff" stroke-width="0.8" fill="none"/>
<path d="M322.1 316.4 L327.7 316.4" stroke="#ffffff" stroke-width="0.8" fill="none"/>
<path d="M322.6 289.0 L329.1 289.0 L330.5 290.4 L330.5 303.2 L329.1 304.6 L322.6 304.6 L321.2 303.2 L321.2 290.4 Z" stroke="#ffffff" stroke-width="1.4" fill="none"/>
<path d="M323.4 300.1 L327.7 294.5" stroke="#ffffff" stroke-width="1.0" fill="none"/>
<path d="M323.4 296.6 L326.5 293.0" stroke="#ffffff" stroke-width="0.9" fill="none"/>
<path d="M325.2 301.6 L328.1 297.5" stroke="#ffffff" stroke-width="0.9" fill="none"/>
<path d="M325.4 294.1 L325.4 293.1 L325.9 292.3 L326.9 292.0 L327.9 292.3 L328.4 293.1 L328.4 294.1" stroke="#ffffff" stroke-width="0.8" fill="none"/>
<path d="M340.0 282.5 L348.8 282.5 L350.4 284.1 L350.4 309.4 L348.8 311.0 L340.0 311.0 L338.4 309.4 L338.4 284.1 Z" stroke="#ffffff" stroke-width="1.2" fill="none"/>
<path d="M348.0 283.7 L348.0 309.8" stroke="#ffffff" stroke-width="1.0" fill="none"/>
<path d="M339.8 285.7 L346.8 285.7" stroke="#ffffff" stroke-width="0.9" fill="none"/>
<path d="M339.8 307.8 L346.8 307.8" stroke="#ffffff" stroke-width="0.9" fill="none"/>
<path d="M339.8 293.2 L346.8 293.2" stroke="#ffffff" stroke-width="0.9" fill="none"/>
<path d="M340.6 288.1 L346.0 288.1" stroke="#ffffff" stroke-width="0.7" fill="none"/>
<path d="M340.6 289.9 L346.0 289.9" stroke="#ffffff" stroke-width="0.7" fill="none"/>
<path d="M340.6 291.7 L346.0 291.7" stroke="#ffffff" stroke-width="0.7" fill="none"/>
<path d="M339.8 300.3 L346.8 300.3" stroke="#ffffff" stroke-width="0.9" fill="none"/>
<path d="M340.6 295.3 L346.0 295.3" stroke="#ffffff" stroke-width="0.7" fill="none"/>
<path d="M340.6 297.1 L346.0 297.1" stroke="#ffffff" stroke-width="0.7" fill="none"/>
<path d="M340.6 298.9 L346.0 298.9" stroke="#ffffff" stroke-width="0.7" fill="none"/>
<path d="M339.8 307.5 L346.8 307.5" stroke="#ffffff" stroke-width="0.9" fill="none"/>
<path d="M340.6 302.5 L346.0 302.5" stroke="#ffffff" stroke-width="0.7" fill="none"/>
<path d="M340.6 304.3 L346.0 304.3" stroke="#ffffff" stroke-width="0.7" fill="none"/>
<path d="M340.6 306.1 L346.0 306.1" stroke="#ffffff" stroke-width="0.7" fill="none"/>
<path d="M350.1 274.7 L349.1 275.9 L348.9 277.5 L347.3 277.7 L346.1 278.7 L344.9 277.7 L343.3 277.5 L343.1 275.9 L342.1 274.7 L343.1 273.5 L343.3 271.9 L344.9 271.7 L346.1 270.7 L347.3 271.7 L348.9 271.9 L349.1 273.5 Z" stroke="#ffffff" stroke-width="1.5" fill="none"/>
<path d="M347.8 274.7 L347.3 275.9 L346.1 276.4 L344.9 275.9 L344.4 274.7 L344.9 273.5 L346.1 273.0 L347.3 273.5 Z" stroke="#ffffff" stroke-width="0.8" fill="none"/>
<path d="M350.1 317.9 L349.1 319.1 L348.9 320.7 L347.3 320.9 L346.1 321.9 L344.9 320.9 L343.3 320.7 L343.1 319.1 L342.1 317.9 L343.1 316.7 L343.3 315.1 L344.9 314.9 L346.1 313.9 L347.3 314.9 L348.9 315.1 L349.1 316.7 Z" stroke="#ffffff" stroke-width="1.5" fill="none"/>
<path d="M347.8 317.9 L347.3 319.1 L346.1 319.6 L344.9 319.1 L344.4 317.9 L344.9 316.7 L346.1 316.2 L347.3 316.7 Z" stroke="#ffffff" stroke-width="0.8" fill="none"/>
<path d="M251.0 325.4 L265.0 325.4" stroke="#ff9a00" stroke-width="2.0" fill="none"/>
<path d="M265.0 325.4 L280.6 325.4" stroke="#ff1030" stroke-width="1.6" fill="none"/>
<path d="M280.6 325.2 L309.8 325.2" stroke="#1010ff" stroke-width="2.2" fill="none"/>
<path d="M249.9 326.8 L252.0 325.4" stroke="#ff1030" stroke-width="1.2" fill="none"/>
<path d="M505.0 212.0 L505.0 195.3 L495.7 195.3 L495.7 188.8 L469.0 188.8 L469.0 195.3 L451.4 195.3 L451.4 188.8 L433.0 188.8 L433.0 195.3 L421.0 195.3 L421.0 231.2" stroke="#ff1030" stroke-width="1.3" fill="none"/>
<path d="M494.2 196.0 L494.2 190.3 L470.5 190.3 L470.5 196.0" stroke="#ffff00" stroke-width="1.4" fill="none"/>
<path d="M449.9 196.0 L449.9 190.3 L434.5 190.3 L434.5 196.0" stroke="#ffff00" stroke-width="1.4" fill="none"/>
<path d="M502.6 232.0 L502.6 197.6 L423.2 197.6 L423.2 232.4" stroke="#22d6d6" stroke-width="1.2" fill="none"/>
<path d="M489.5 234.2 L463.4 234.2" stroke="#ff3a5c" stroke-width="1.8" fill="none"/>
<path d="M504.5 233.6 L500.5 233.6" stroke="#ff3a5c" stroke-width="1.6" fill="none"/>
<path d="M463.4 234.0 L421.0 234.0" stroke="#22d6d6" stroke-width="1.2" fill="none"/>
<path d="M460.0 232.0 L423.2 232.0" stroke="#22d6d6" stroke-width="1.2" fill="none"/>
<path d="M462.4 197.6 L462.4 232.0" stroke="#22d6d6" stroke-width="1.2" fill="none"/>
<path d="M459.4 197.6 L459.4 218.0" stroke="#22d6d6" stroke-width="1.2" fill="none"/>
<path d="M459.4 226.0 L459.4 232.0" stroke="#22d6d6" stroke-width="1.2" fill="none"/>
<path d="M495.4 198.8 L484.8 198.8 L484.8 206.0 L495.4 206.0 Z" stroke="#ff1030" stroke-width="1" fill="#ff1030"/>
<path d="M493.5 200.5 L486.7 200.5 L486.7 204.4 L493.5 204.4 Z" stroke="#600" stroke-width="0.8" fill="none"/>
<path d="M481.7 198.6 L473.6 198.6 L473.6 207.0 L481.7 207.0 Z" stroke="#ffffff" stroke-width="1.2" fill="none"/>
<path d="M481.7 198.6 L477.7 203.0 L473.6 198.6" stroke="#ffffff" stroke-width="0.9" fill="none"/>
<path d="M481.7 203.4 L473.6 203.4" stroke="#ffffff" stroke-width="0.9" fill="none"/>
<path d="M472.2 199.8 L464.4 199.8 L464.4 207.4 L472.2 207.4 Z" stroke="#ffffff" stroke-width="1.2" fill="none" opacity="0.85"/>
<path d="M501.7 209.2 L495.0 209.2 L495.0 219.6 L501.7 219.6 Z" stroke="#ff1030" stroke-width="1.2" fill="none"/>
<path d="M500.4 210.4 L496.2 210.4 L496.2 218.4 L500.4 218.4 Z" stroke="#ffffff" stroke-width="0.9" fill="none"/>
<path d="M500.4 214.4 L496.2 214.4" stroke="#ff1030" stroke-width="1.0" fill="none"/>
<text transform="translate(477.4 222.2)" font-size="5" fill="#ffffff" text-anchor="middle" font-family='"Liberation Sans","Noto Sans CJK SC",sans-serif' font-weight="bold">厨房</text>
<path d="M453.0 199.3 L453.0 201.3 L458.6 201.3 L458.6 199.3 Z" stroke="#ffffff" stroke-width="1.2" fill="none"/>
<path d="M453.4 201.3 L453.4 204.6 L453.7 206.3 L454.6 207.5 L455.8 208.0 L457.0 207.5 L457.9 206.3 L458.2 204.6 L458.2 201.3 Z" stroke="#ffffff" stroke-width="1.2" fill="none"/>
<path d="M444.0 197.6 L444.0 213.8 L454.2 213.8" stroke="#22d6d6" stroke-width="1.2" fill="none"/>
<path d="M442.0 197.6 L442.0 215.6" stroke="#22d6d6" stroke-width="1.2" fill="none"/>
<path d="M446.0 210.0 L446.5 211.4 L447.7 212.3 L449.1 212.3 L450.3 211.4 L450.8 210.0 L450.3 208.6 L449.1 207.7 L447.7 207.7 L446.5 208.6 Z" stroke="#ffffff" stroke-width="1.0" fill="none"/>
<path d="M451.0 212.4 L446.0 212.4" stroke="#ffffff" stroke-width="0.8" fill="none"/>
<path d="M437.2 202.6 L424.4 202.6 L424.4 230.2 L437.2 230.2 Z" stroke="#ffffff" stroke-width="1.2" fill="none"/>
<path d="M437.2 204.6 L431.5 210.0 L424.4 203.6" stroke="#ffffff" stroke-width="0.9" fill="none"/>
<path d="M437.0 205.5 L424.6 205.5" stroke="#ffffff" stroke-width="0.8" fill="none"/>
<path d="M427.2 226.6 L427.7 227.4 L429.0 228.1 L430.8 228.3 L432.6 228.1 L433.9 227.4 L434.4 226.6 L433.9 225.8 L432.6 225.1 L430.8 224.9 L429.0 225.1 L427.7 225.8 Z" stroke="#ffffff" stroke-width="0.9" fill="none"/>
<text transform="translate(444.6 225.0)" font-size="4.6" fill="#ffffff" text-anchor="middle" font-family='"Liberation Sans","Noto Sans CJK SC",sans-serif' font-weight="bold">工人房</text>
<path d="M502.0 223.0 L500.6 223.1 L499.2 223.4 L497.9 224.0 L496.7 224.7 L495.6 225.6 L494.7 226.7 L494.0 227.9 L493.4 229.2 L493.1 230.6 L493.0 232.0" stroke="#1010ff" stroke-width="1.2" fill="none"/>
<path d="M468.5 232.0 L468.4 230.7 L468.1 229.4 L467.6 228.1 L466.9 227.0 L466.0 226.0 L465.0 225.1 L463.9 224.4 L462.6 223.9 L461.3 223.6 L460.0 223.5" stroke="#1010ff" stroke-width="1.2" fill="none"/>
<path d="M459.0 213.0 L455.0 215.5 L453.0 213.5" stroke="#1010ff" stroke-width="1.1" fill="none"/>
<path d="M474.4 235.2 L473.0 240.0 L470.0 243.5 L466.5 245.5" stroke="#1010ff" stroke-width="1.2" fill="none"/>
<path d="M466.5 245.5 L464.0 248.0 L463.4 251.6" stroke="#1010ff" stroke-width="1.2" fill="none"/>
<path d="M470.0 250.5 L466.5 245.5 L463.0 244.0" stroke="#1010ff" stroke-width="1.0" fill="none"/>
<path d="M606.8 237.9 L584.1 210.7 L505.0 210.7" stroke="#ff1030" stroke-width="1.3" fill="none"/>
<path d="M598.3 228.8 L583.6 212.5 L505.0 212.5" stroke="#ff9a00" stroke-width="1.2" fill="none"/>
<path d="M551.0 212.8 L551.0 214.8" stroke="#22d6d6" stroke-width="1.2" fill="none"/>
<path d="M548.5 212.8 L548.5 214.8" stroke="#22d6d6" stroke-width="1.2" fill="none"/>
<path d="M562.5 226.5 L562.4 224.6 L561.9 222.7 L561.2 220.9 L560.2 219.3 L559.0 217.8 L557.6 216.5 L555.9 215.5 L554.2 214.7 L552.3 214.2 L550.4 214.0" stroke="#1010ff" stroke-width="1.2" fill="none"/>
<path d="M562.5 226.5 L562.5 228.0" stroke="#1010ff" stroke-width="1.1" fill="none"/>
<path d="M515.8 229.4 L516.2 231.7 L517.3 233.9 L518.9 235.5 L521.1 236.6 L523.4 237.0 L525.7 236.6 L527.9 235.5 L529.5 233.9 L530.6 231.7 L531.0 229.4 L530.6 227.1 L529.5 224.9 L527.9 223.3 L525.7 222.2 L523.4 221.8 L521.1 222.2 L518.9 223.3 L517.3 224.9 L516.2 227.1 Z" stroke="#ffffff" stroke-width="1.2" fill="none"/>
<path d="M526.3 219.2 L526.3 214.4 L520.5 214.4 L520.5 219.2 Z" stroke="#ffffff" stroke-width="1.2" fill="none"/>
<path d="M526.6 213.4 L520.2 213.4" stroke="#ffffff" stroke-width="1.2" fill="none"/>
<path d="M516.0 221.8 L511.9 219.4 L509.0 224.4 L513.1 226.8 Z" stroke="#ffffff" stroke-width="1.2" fill="none"/>
<path d="M511.1 218.6 L507.9 224.2" stroke="#ffffff" stroke-width="1.2" fill="none"/>
<path d="M513.1 232.0 L509.0 234.4 L511.9 239.4 L516.0 237.0 Z" stroke="#ffffff" stroke-width="1.2" fill="none"/>
<path d="M507.9 234.6 L511.1 240.2" stroke="#ffffff" stroke-width="1.2" fill="none"/>
<path d="M520.5 239.6 L520.5 244.4 L526.3 244.4 L526.3 239.6 Z" stroke="#ffffff" stroke-width="1.2" fill="none"/>
<path d="M520.2 245.4 L526.6 245.4" stroke="#ffffff" stroke-width="1.2" fill="none"/>
<path d="M530.8 237.0 L534.9 239.4 L537.8 234.4 L533.7 232.0 Z" stroke="#ffffff" stroke-width="1.2" fill="none"/>
<path d="M535.7 240.2 L538.9 234.6" stroke="#ffffff" stroke-width="1.2" fill="none"/>
<path d="M533.7 226.8 L537.8 224.4 L534.9 219.4 L530.8 221.8 Z" stroke="#ffffff" stroke-width="1.2" fill="none"/>
<path d="M538.9 224.2 L535.7 218.6" stroke="#ffffff" stroke-width="1.2" fill="none"/>
<text transform="translate(523.4 231.2)" font-size="4.6" fill="#ffffff" text-anchor="middle" font-family='"Liberation Sans","Noto Sans CJK SC",sans-serif' font-weight="bold">餐厅</text>
<path d="M600.0 229.4 L577.9 229.4" stroke="#22d6d6" stroke-width="1.2" fill="none"/>
<path d="M600.0 232.2 L577.9 232.2" stroke="#22d6d6" stroke-width="1.2" fill="none"/>
<path d="M578.0 230.8 L562.6 230.8" stroke="#1010ff" stroke-width="2.6" fill="none"/>
<path d="M562.8 227.7 L548.4 227.7 L548.4 255.6 L562.8 255.6 Z" stroke="#22d6d6" stroke-width="1.2" fill="none"/>
<path d="M610.8 245.3 L600.0 253.3 L573.4 253.3" stroke="#22d6d6" stroke-width="1.2" fill="none"/>
<path d="M608.5 243.3 L599.4 255.2 L573.4 255.2" stroke="#22d6d6" stroke-width="1.2" fill="none"/>
<path d="M600.0 229.4 L608.5 241.3" stroke="#22d6d6" stroke-width="1.2" fill="none"/>
<path d="M588.7 232.2 L588.7 238.0 L584.1 240.8 L563.0 240.8" stroke="#ffff00" stroke-width="1.2" fill="none"/>
<path d="M572.4 235.4 L573.0 237.3 L574.6 238.4 L576.6 238.4 L578.2 237.3 L578.8 235.4 L578.2 233.5 L576.6 232.4 L574.6 232.4 L573.0 233.5 Z" stroke="#ffff00" stroke-width="1.1" fill="none"/>
<path d="M577.5 234.4 L575.6 236.6 L573.7 234.4" stroke="#ffff00" stroke-width="0.9" fill="none"/>
<path d="M561.2 233.0 L550.8 233.0 L550.8 252.6 L561.2 252.6 Z" stroke="#ff1030" stroke-width="1.7" fill="none"/>
<path d="M558.8 236.8 L556.0 234.8 L553.2 236.8" stroke="#ff1030" stroke-width="0.8" fill="none"/>
<path d="M556.0 250.0 L556.0 251.8" stroke="#ff1030" stroke-width="1.0" fill="none"/>
<path d="M571.0 253.0 L570.9 251.9 L570.7 250.7 L570.3 249.7 L569.7 248.7 L569.0 247.8 L568.2 246.9 L567.3 246.3 L566.3 245.7 L565.2 245.3 L564.1 245.1" stroke="#1010ff" stroke-width="1.2" fill="none"/>
<path d="M572.4 253.6 L563.0 253.6" stroke="#ffff00" stroke-width="1.1" fill="none"/>
<path d="M599.0 246.3 L600.5 245.1 L596.9 240.8 L595.4 242.0 Z" stroke="#ffffff" stroke-width="1.2" fill="none"/>
<path d="M600.2 244.7 L602.8 242.6 L603.9 241.3 L604.2 239.8 L603.8 238.6 L602.7 238.0 L601.2 238.1 L599.7 238.9 L597.1 241.1 Z" stroke="#ffffff" stroke-width="1.2" fill="none"/>
<path d="M598.3 282.6 L588.1 270.7 L548.6 270.7 L548.6 325.0" stroke="#22d6d6" stroke-width="1.2" fill="none"/>
<path d="M596.0 284.4 L587.2 272.8 L550.8 272.8" stroke="#22d6d6" stroke-width="1.2" fill="none"/>
<path d="M584.1 295.0 L577.9 288.3 L561.0 288.3" stroke="#22d6d6" stroke-width="1.2" fill="none"/>
<path d="M590.4 303.6 L584.0 297.3 L562.6 297.3" stroke="#ffff00" stroke-width="1.2" fill="none"/>
<path d="M567.3 292.6 L567.9 294.5 L569.5 295.6 L571.5 295.6 L573.1 294.5 L573.7 292.6 L573.1 290.7 L571.5 289.6 L569.5 289.6 L567.9 290.7 Z" stroke="#ffff00" stroke-width="1.1" fill="none"/>
<path d="M572.4 291.6 L570.5 293.8 L568.6 291.6" stroke="#ffff00" stroke-width="0.9" fill="none"/>
<path d="M561.8 291.3 L551.5 291.3 L551.5 310.2 L561.8 310.2 Z" stroke="#ff1030" stroke-width="1.7" fill="none"/>
<path d="M559.4 295.1 L556.6 293.1 L553.9 295.1" stroke="#ff1030" stroke-width="0.8" fill="none"/>
<path d="M556.6 307.6 L556.6 309.4" stroke="#ff1030" stroke-width="1.0" fill="none"/>
<path d="M560.3 273.0 L551.2 273.0 L551.2 286.6 L560.3 286.6 Z" stroke="#ffffff" stroke-width="0.9" fill="none"/>
<path d="M560.3 275.7 L551.2 275.7" stroke="#ffffff" stroke-width="0.9" fill="none"/>
<path d="M560.3 278.4 L551.2 278.4" stroke="#ffffff" stroke-width="0.9" fill="none"/>
<path d="M560.3 281.2 L551.2 281.2" stroke="#ffffff" stroke-width="0.9" fill="none"/>
<path d="M560.3 283.9 L551.2 283.9" stroke="#ffffff" stroke-width="0.9" fill="none"/>
<path d="M555.8 273.0 L555.8 286.6" stroke="#ffffff" stroke-width="0.9" fill="none"/>
<path d="M551.8 320.0 L553.8 320.0 L553.8 314.4 L551.8 314.4 Z" stroke="#ffffff" stroke-width="1.2" fill="none"/>
<path d="M553.8 319.6 L557.1 319.6 L558.8 319.3 L560.0 318.4 L560.5 317.2 L560.0 316.0 L558.8 315.1 L557.1 314.8 L553.8 314.8 Z" stroke="#ffffff" stroke-width="1.2" fill="none"/>
<path d="M506.2 325.0 L463.4 325.0" stroke="#22d6d6" stroke-width="1.2" fill="none"/>
<path d="M548.3 273.8 L538.5 273.8 L538.5 310.7 L548.3 310.7 Z" stroke="#ffffff" stroke-width="1.2" fill="none"/>
<path d="M546.3 289.6 L541.1 289.6 L541.1 294.8 L546.3 294.8 Z" stroke="#ffffff" stroke-width="1.2" fill="none"/>
<path d="M541.1 290.7 L538.2 287.7" stroke="#ffffff" stroke-width="0.9" fill="none"/>
<path d="M541.1 293.7 L538.2 296.7" stroke="#ffffff" stroke-width="0.9" fill="none"/>
<path d="M544.7 294.8 L546.0 294.5 L547.0 293.5 L547.3 292.2 L547.0 290.9 L546.0 289.9 L544.7 289.6" stroke="#ffffff" stroke-width="0.8" fill="none"/>
<text transform="translate(517.6 295.4)" font-size="4.6" fill="#ffffff" text-anchor="middle" font-family='"Liberation Sans","Noto Sans CJK SC",sans-serif' font-weight="bold">客厅</text>
<path d="M496.9 272.4 L485.3 272.4 L483.7 274.0 L483.7 281.8 L485.3 283.4 L496.9 283.4 L498.5 281.8 L498.5 274.0 Z" stroke="#ffffff" stroke-width="1.2" fill="none"/>
<path d="M495.1 274.4 L495.1 282.2" stroke="#ffffff" stroke-width="1.0" fill="none"/>
<path d="M487.1 274.4 L487.1 282.2" stroke="#ffffff" stroke-width="1.0" fill="none"/>
<path d="M497.5 274.4 L484.7 274.4" stroke="#ffffff" stroke-width="1.0" fill="none"/>
<path d="M491.9 276.3 L491.9 280.4" stroke="#ffffff" stroke-width="0.8" fill="none"/>
<path d="M489.9 276.3 L489.9 280.4" stroke="#ffffff" stroke-width="0.8" fill="none"/>
<path d="M493.9 278.2 L488.3 278.2" stroke="#ffffff" stroke-width="0.8" fill="none"/>
<path d="M496.9 310.7 L485.3 310.7 L483.7 312.3 L483.7 319.8 L485.3 321.4 L496.9 321.4 L498.5 319.8 L498.5 312.3 Z" stroke="#ffffff" stroke-width="1.2" fill="none"/>
<path d="M495.1 312.7 L495.1 320.2" stroke="#ffffff" stroke-width="1.0" fill="none"/>
<path d="M487.1 312.7 L487.1 320.2" stroke="#ffffff" stroke-width="1.0" fill="none"/>
<path d="M497.5 312.7 L484.7 312.7" stroke="#ffffff" stroke-width="1.0" fill="none"/>
<path d="M491.9 314.6 L491.9 318.4" stroke="#ffffff" stroke-width="0.8" fill="none"/>
<path d="M489.9 314.6 L489.9 318.4" stroke="#ffffff" stroke-width="0.8" fill="none"/>
<path d="M493.9 316.4 L488.3 316.4" stroke="#ffffff" stroke-width="0.8" fill="none"/>
<path d="M493.4 289.0 L486.9 289.0 L485.5 290.4 L485.5 303.2 L486.9 304.6 L493.4 304.6 L494.8 303.2 L494.8 290.4 Z" stroke="#ffffff" stroke-width="1.4" fill="none"/>
<path d="M492.6 300.1 L488.3 294.5" stroke="#ffffff" stroke-width="1.0" fill="none"/>
<path d="M492.6 296.6 L489.5 293.0" stroke="#ffffff" stroke-width="0.9" fill="none"/>
<path d="M490.8 301.6 L487.9 297.5" stroke="#ffffff" stroke-width="0.9" fill="none"/>
<path d="M490.6 294.1 L490.6 293.1 L490.1 292.3 L489.1 292.0 L488.1 292.3 L487.6 293.1 L487.6 294.1" stroke="#ffffff" stroke-width="0.8" fill="none"/>
<path d="M476.0 282.5 L467.2 282.5 L465.6 284.1 L465.6 309.4 L467.2 311.0 L476.0 311.0 L477.6 309.4 L477.6 284.1 Z" stroke="#ffffff" stroke-width="1.2" fill="none"/>
<path d="M468.0 283.7 L468.0 309.8" stroke="#ffffff" stroke-width="1.0" fill="none"/>
<path d="M476.2 285.7 L469.2 285.7" stroke="#ffffff" stroke-width="0.9" fill="none"/>
<path d="M476.2 307.8 L469.2 307.8" stroke="#ffffff" stroke-width="0.9" fill="none"/>
<path d="M476.2 293.2 L469.2 293.2" stroke="#ffffff" stroke-width="0.9" fill="none"/>
<path d="M475.4 288.1 L470.0 288.1" stroke="#ffffff" stroke-width="0.7" fill="none"/>
<path d="M475.4 289.9 L470.0 289.9" stroke="#ffffff" stroke-width="0.7" fill="none"/>
<path d="M475.4 291.7 L470.0 291.7" stroke="#ffffff" stroke-width="0.7" fill="none"/>
<path d="M476.2 300.3 L469.2 300.3" stroke="#ffffff" stroke-width="0.9" fill="none"/>
<path d="M475.4 295.3 L470.0 295.3" stroke="#ffffff" stroke-width="0.7" fill="none"/>
<path d="M475.4 297.1 L470.0 297.1" stroke="#ffffff" stroke-width="0.7" fill="none"/>
<path d="M475.4 298.9 L470.0 298.9" stroke="#ffffff" stroke-width="0.7" fill="none"/>
<path d="M476.2 307.5 L469.2 307.5" stroke="#ffffff" stroke-width="0.9" fill="none"/>
<path d="M475.4 302.5 L470.0 302.5" stroke="#ffffff" stroke-width="0.7" fill="none"/>
<path d="M475.4 304.3 L470.0 304.3" stroke="#ffffff" stroke-width="0.7" fill="none"/>
<path d="M475.4 306.1 L470.0 306.1" stroke="#ffffff" stroke-width="0.7" fill="none"/>
<path d="M465.9 274.7 L466.9 275.9 L467.1 277.5 L468.7 277.7 L469.9 278.7 L471.1 277.7 L472.7 277.5 L472.9 275.9 L473.9 274.7 L472.9 273.5 L472.7 271.9 L471.1 271.7 L469.9 270.7 L468.7 271.7 L467.1 271.9 L466.9 273.5 Z" stroke="#ffffff" stroke-width="1.5" fill="none"/>
<path d="M468.2 274.7 L468.7 275.9 L469.9 276.4 L471.1 275.9 L471.6 274.7 L471.1 273.5 L469.9 273.0 L468.7 273.5 Z" stroke="#ffffff" stroke-width="0.8" fill="none"/>
<path d="M465.9 317.9 L466.9 319.1 L467.1 320.7 L468.7 320.9 L469.9 321.9 L471.1 320.9 L472.7 320.7 L472.9 319.1 L473.9 317.9 L472.9 316.7 L472.7 315.1 L471.1 314.9 L469.9 313.9 L468.7 314.9 L467.1 315.1 L466.9 316.7 Z" stroke="#ffffff" stroke-width="1.5" fill="none"/>
<path d="M468.2 317.9 L468.7 319.1 L469.9 319.6 L471.1 319.1 L471.6 317.9 L471.1 316.7 L469.9 316.2 L468.7 316.7 Z" stroke="#ffffff" stroke-width="0.8" fill="none"/>
<path d="M565.0 325.4 L551.0 325.4" stroke="#ff9a00" stroke-width="2.0" fill="none"/>
<path d="M551.0 325.4 L535.4 325.4" stroke="#ff1030" stroke-width="1.6" fill="none"/>
<path d="M535.4 325.2 L506.2 325.2" stroke="#1010ff" stroke-width="2.2" fill="none"/>
<path d="M566.1 326.8 L564.0 325.4" stroke="#ff1030" stroke-width="1.2" fill="none"/>
<text transform="translate(293.5 266.2)" font-size="12.5" fill="#ffffff" text-anchor="middle" font-family='"Liberation Sans","Noto Sans CJK SC",sans-serif'>A</text>
<text transform="translate(516.7 266.6)" font-size="12.5" fill="#ffffff" text-anchor="middle" font-family='"Liberation Sans","Noto Sans CJK SC",sans-serif'>B</text>
<text transform="translate(414.1 376.2)" font-size="12.5" fill="#ffffff" text-anchor="middle" font-family='"Liberation Sans","Noto Sans CJK SC",sans-serif'>C</text>
<path d="M395.0 231.2 L421.0 231.2" stroke="#ff1030" stroke-width="1.4" fill="none"/>
<path d="M395.0 233.6 L421.0 233.6" stroke="#1010ff" stroke-width="1.6" fill="none"/>
<path d="M352.6 326.4 L352.6 252.6 L396.0 252.6 L396.0 258.5" stroke="#22d6d6" stroke-width="1.2" fill="none"/>
<path d="M396.0 268.0 L396.0 326.4 L371.0 326.4" stroke="#22d6d6" stroke-width="1.2" fill="none"/>
<path d="M357.2 322.1 L357.2 257.0 L390.0 257.0 L390.0 259.0" stroke="#22d6d6" stroke-width="1.2" fill="none"/>
<path d="M391.4 268.5 L391.4 322.1 L371.0 322.1" stroke="#22d6d6" stroke-width="1.2" fill="none"/>
<path d="M352.6 326.4 L358.0 326.4" stroke="#22d6d6" stroke-width="1.2" fill="none"/>
<path d="M357.2 322.1 L358.0 322.1" stroke="#22d6d6" stroke-width="1.2" fill="none"/>
<path d="M358.0 324.3 L368.5 324.3" stroke="#1010ff" stroke-width="3.2" fill="none"/>
<path d="M383.0 268.0 L383.1 266.5 L383.5 265.1 L384.1 263.7 L384.9 262.5 L385.9 261.4 L387.1 260.5 L388.4 259.7 L389.8 259.3 L391.3 259.0 L392.8 259.0" stroke="#1010ff" stroke-width="1.2" fill="none"/>
<path d="M358.1 274.7 L390.4 274.7" stroke="#ffff00" stroke-width="1.05" fill="none"/>
<path d="M358.1 278.4 L390.4 278.4" stroke="#ffff00" stroke-width="1.05" fill="none"/>
<path d="M358.1 282.2 L390.4 282.2" stroke="#ffff00" stroke-width="1.05" fill="none"/>
<path d="M358.1 285.9 L390.4 285.9" stroke="#ffff00" stroke-width="1.05" fill="none"/>
<path d="M358.1 289.7 L390.4 289.7" stroke="#ffff00" stroke-width="1.05" fill="none"/>
<path d="M358.1 293.4 L390.4 293.4" stroke="#ffff00" stroke-width="1.05" fill="none"/>
<path d="M358.1 297.1 L390.4 297.1" stroke="#ffff00" stroke-width="1.05" fill="none"/>
<path d="M358.1 300.9 L390.4 300.9" stroke="#ffff00" stroke-width="1.05" fill="none"/>
<path d="M358.1 304.6 L390.4 304.6" stroke="#ffff00" stroke-width="1.05" fill="none"/>
<path d="M373.8 274.7 L373.8 304.8" stroke="#ffff00" stroke-width="1.4" fill="none"/>
<path d="M358.5 293.0 L370.0 287.2 L371.0 289.5 L373.8 287.0" stroke="#ffff00" stroke-width="0.9" fill="none"/>
<path d="M364.6 268.6 L364.6 314.8 L383.0 314.8 L383.0 268.6" stroke="#00f000" stroke-width="1.1" fill="none"/>
<path d="M420.3 326.8 L420.3 252.0 L460.5 252.0 L460.5 326.8" stroke="#22d6d6" stroke-width="1.2" fill="none"/>
<path d="M420.3 326.8 L444.9 326.8" stroke="#22d6d6" stroke-width="1.2" fill="none"/>
<path d="M446.8 326.8 L460.5 326.8" stroke="#22d6d6" stroke-width="1.2" fill="none"/>
<path d="M424.9 256.6 L455.4 256.6 L455.4 288.4 L424.9 288.4 Z" stroke="#22d6d6" stroke-width="1.2" fill="none"/>
<path d="M424.9 291.7 L455.4 291.7 L455.4 323.0 L424.9 323.0 Z" stroke="#22d6d6" stroke-width="1.2" fill="none"/>
<path d="M428.6 259.0 L446.2 259.0 L446.2 285.6 L428.6 285.6 Z" stroke="#ffff00" stroke-width="1.1" fill="none"/>
<path d="M428.6 259.0 L446.2 285.6" stroke="#ffff00" stroke-width="0.9" fill="none"/>
<path d="M446.2 259.0 L428.6 285.6" stroke="#ffff00" stroke-width="0.9" fill="none"/>
<path d="M448.9 264.0 L453.2 264.0 L453.2 281.0 L448.9 281.0 Z" stroke="#ffff00" stroke-width="1.0" fill="none"/>
<path d="M424.9 264.0 L424.9 280.6" stroke="#1010ff" stroke-width="1.2" fill="none"/>
<path d="M428.6 294.5 L446.2 294.5 L446.2 320.7 L428.6 320.7 Z" stroke="#ffff00" stroke-width="1.1" fill="none"/>
<path d="M428.6 294.5 L446.2 320.7" stroke="#ffff00" stroke-width="0.9" fill="none"/>
<path d="M446.2 294.5 L428.6 320.7" stroke="#ffff00" stroke-width="0.9" fill="none"/>
<path d="M448.9 298.7 L453.2 298.7 L453.2 315.7 L448.9 315.7 Z" stroke="#ffff00" stroke-width="1.0" fill="none"/>
<path d="M424.9 299.5 L424.9 315.7" stroke="#1010ff" stroke-width="1.2" fill="none"/>
<path d="M420.3 256.0 L424.9 256.0" stroke="#22d6d6" stroke-width="1.2" fill="none"/>
<path d="M420.3 290.0 L424.9 290.0" stroke="#22d6d6" stroke-width="1.2" fill="none"/>
<path d="M369.2 327.0 L369.2 347.0" stroke="#ff1030" stroke-width="1.3" fill="none"/>
<path d="M371.5 327.0 L371.5 347.0" stroke="#1010ff" stroke-width="1.4" fill="none"/>
<path d="M265.0 327.2 L369.0 327.2" stroke="#ff1030" stroke-width="1.3" fill="none"/>
<path d="M400.0 346.7 L423.0 346.7 L423.0 344.9" stroke="#22d6d6" stroke-width="1.2" fill="none"/>
<path d="M434.3 328.5 L433.0 334.0 L429.5 340.5 L425.5 344.5 L422.5 346.5" stroke="#1010ff" stroke-width="1.2" fill="none"/>
<path d="M430.0 336.0 L434.0 338.5" stroke="#1010ff" stroke-width="1.0" fill="none"/>
<path d="M497.8 279.1 L532.0 279.1" stroke="#ffffff" stroke-width="1.1" fill="none"/>
<path d="M511.3 258.5 L511.3 299.0" stroke="#ffffff" stroke-width="1.1" fill="none"/>
<path d="M508.8 276.6 L513.8 276.6 L513.8 281.6 L508.8 281.6 Z" stroke="#ffffff" stroke-width="1.0" fill="#000"/>
<path d="M370.0 347.5 L320.0 347.5 L320.0 366.4 L313.3 366.4 L313.3 391.3 L320.0 391.3 L320.0 468.6 L327.7 468.6 L327.7 477.0 L363.7 477.0 L363.7 468.6 L370.5 468.6" stroke="#ff3a5c" stroke-width="1.25" fill="none"/>
<path d="M315.2 368.2 L315.2 389.5" stroke="#ffff00" stroke-width="1.3" fill="none"/>
<path d="M315.2 368.2 L320.0 368.2" stroke="#ffff00" stroke-width="1.1" fill="none"/>
<path d="M315.2 389.5 L320.0 389.5" stroke="#ffff00" stroke-width="1.1" fill="none"/>
<path d="M329.6 468.6 L329.6 475.2 L361.8 475.2 L361.8 468.6" stroke="#ffff00" stroke-width="1.2" fill="none"/>
<path d="M322.4 466.2 L322.4 349.0 L370.2 349.0" stroke="#22d6d6" stroke-width="1.2" fill="none"/>
<path d="M322.4 466.2 L370.5 466.2" stroke="#22d6d6" stroke-width="1.2" fill="none"/>
<path d="M370.2 349.0 L370.2 395.0 L367.5 395.0" stroke="#22d6d6" stroke-width="1.2" fill="none"/>
<path d="M368.2 349.0 L368.2 395.0" stroke="#22d6d6" stroke-width="1.2" fill="none"/>
<path d="M322.4 395.0 L353.5 395.0" stroke="#22d6d6" stroke-width="1.2" fill="none"/>
<path d="M322.4 397.0 L353.5 397.0" stroke="#22d6d6" stroke-width="1.2" fill="none"/>
<path d="M353.5 408.0 L353.5 419.0 L322.4 419.0" stroke="#22d6d6" stroke-width="1.2" fill="none"/>
<path d="M322.4 421.0 L353.5 421.0" stroke="#22d6d6" stroke-width="1.2" fill="none"/>
<path d="M370.7 410.7 L370.7 466.2" stroke="#22d6d6" stroke-width="1.2" fill="none"/>
<path d="M368.5 410.7 L368.5 466.2" stroke="#22d6d6" stroke-width="1.2" fill="none"/>
<path d="M368.5 410.7 L372.5 410.7" stroke="#22d6d6" stroke-width="1.2" fill="none"/>
<path d="M371.5 347.0 L422.8 347.0 L422.8 344.5" stroke="#22d6d6" stroke-width="1.2" fill="none"/>
<path d="M372.0 349.0 L422.8 349.0" stroke="#22d6d6" stroke-width="1.2" fill="none"/>
<path d="M323.6 349.6 L353.5 349.6 L353.5 363.6 L323.6 363.6 Z" stroke="#ffffff" stroke-width="1.2" fill="none"/>
<path d="M346.5 363.6 L352.0 351.0 L353.5 363.6" stroke="#ffffff" stroke-width="0.9" fill="none"/>
<path d="M345.0 349.6 L345.0 363.6" stroke="#ffffff" stroke-width="0.8" fill="none"/>
<path d="M329.4 356.6 L329.2 358.4 L328.5 359.7 L327.6 360.2 L326.7 359.7 L326.0 358.4 L325.8 356.6 L326.0 354.8 L326.7 353.5 L327.6 353.0 L328.5 353.5 L329.2 354.8 Z" stroke="#ffffff" stroke-width="0.9" fill="none"/>
<path d="M361.0 349.6 L368.2 349.6 L368.2 380.2 L361.0 380.2 Z" stroke="#ffffff" stroke-width="0.9" fill="none"/>
<path d="M361.0 352.7 L368.2 352.7" stroke="#ffffff" stroke-width="0.9" fill="none"/>
<path d="M361.0 355.7 L368.2 355.7" stroke="#ffffff" stroke-width="0.9" fill="none"/>
<path d="M361.0 358.8 L368.2 358.8" stroke="#ffffff" stroke-width="0.9" fill="none"/>
<path d="M361.0 361.8 L368.2 361.8" stroke="#ffffff" stroke-width="0.9" fill="none"/>
<path d="M361.0 364.9 L368.2 364.9" stroke="#ffffff" stroke-width="0.9" fill="none"/>
<path d="M361.0 368.0 L368.2 368.0" stroke="#ffffff" stroke-width="0.9" fill="none"/>
<path d="M361.0 371.0 L368.2 371.0" stroke="#ffffff" stroke-width="0.9" fill="none"/>
<path d="M361.0 374.1 L368.2 374.1" stroke="#ffffff" stroke-width="0.9" fill="none"/>
<path d="M361.0 377.1 L368.2 377.1" stroke="#ffffff" stroke-width="0.9" fill="none"/>
<path d="M364.6 349.6 L364.6 380.2" stroke="#ffffff" stroke-width="0.9" fill="none"/>
<path d="M323.0 368.8 L329.5 368.8 L329.5 390.4 L323.0 390.4 Z" stroke="#ffffff" stroke-width="1.2" fill="none"/>
<path d="M331.5 377.4 L337.0 377.4 L337.0 383.0 L331.5 383.0 Z" stroke="#ffffff" stroke-width="1.2" fill="none"/>
<path d="M338.2 376.6 L338.2 383.8" stroke="#ffffff" stroke-width="1.0" fill="none"/>
<text transform="translate(347.6 380.6)" font-size="4.6" fill="#ffffff" text-anchor="middle" font-family='"Liberation Sans","Noto Sans CJK SC",sans-serif' font-weight="bold">卧室</text>
<path d="M358.0 396.0 L358.1 394.4 L358.5 392.9 L359.1 391.5 L359.9 390.1 L360.9 388.9 L362.1 387.9 L363.5 387.1 L364.9 386.5 L366.4 386.1 L368.0 386.0" stroke="#1010ff" stroke-width="1.2" fill="none"/>
<path d="M363.5 396.0 L363.4 394.5 L363.1 393.1 L362.5 391.7 L361.8 390.4 L360.9 389.2 L359.8 388.2 L358.6 387.4 L357.2 386.7 L355.8 386.3 L354.4 386.0" stroke="#1010ff" stroke-width="1.2" fill="none"/>
<path d="M352.6 418.0 L351.2 417.7 L349.8 417.3 L348.4 416.6 L347.2 415.8 L346.1 414.8 L345.2 413.6 L344.5 412.3 L343.9 410.9 L343.6 409.5 L343.5 408.0" stroke="#1010ff" stroke-width="1.2" fill="none"/>
<path d="M369.0 419.5 L367.5 419.4 L366.1 419.0 L364.7 418.5 L363.4 417.7 L362.3 416.7 L361.3 415.6 L360.5 414.3 L360.0 412.9 L359.6 411.5 L359.5 410.0" stroke="#1010ff" stroke-width="1.2" fill="none"/>
<path d="M323.2 400.5 L325.2 400.5 L325.2 406.1 L323.2 406.1 Z" stroke="#ffffff" stroke-width="1.2" fill="none"/>
<path d="M325.2 400.9 L328.5 400.9 L330.2 401.2 L331.4 402.1 L331.9 403.3 L331.4 404.5 L330.2 405.4 L328.5 405.7 L325.2 405.7 Z" stroke="#ffffff" stroke-width="1.2" fill="none"/>
<path d="M321.2 400.5 L321.2 412.5" stroke="#c000ff" stroke-width="1.6" fill="none"/>
<path d="M323.0 414.7 L333.2 414.7 L337.0 410.7 L349.8 410.7" stroke="#ff1030" stroke-width="1.2" fill="none"/>
<path d="M345.7 414.4 L345.1 416.3 L343.5 417.4 L341.5 417.4 L339.9 416.3 L339.3 414.4 L339.9 412.5 L341.5 411.4 L343.5 411.4 L345.1 412.5 Z" stroke="#ffffff" stroke-width="1.1" fill="none"/>
<path d="M340.8 413.4 L342.5 415.6 L344.2 413.4" stroke="#ffffff" stroke-width="0.9" fill="none"/>
<path d="M323.6 421.8 L352.6 421.8 L352.6 429.1 L323.6 429.1 Z" stroke="#ffffff" stroke-width="0.9" fill="none"/>
<path d="M325.8 421.8 L325.8 429.1" stroke="#ffffff" stroke-width="0.9" fill="none"/>
<path d="M328.1 421.8 L328.1 429.1" stroke="#ffffff" stroke-width="0.9" fill="none"/>
<path d="M330.3 421.8 L330.3 429.1" stroke="#ffffff" stroke-width="0.9" fill="none"/>
<path d="M332.5 421.8 L332.5 429.1" stroke="#ffffff" stroke-width="0.9" fill="none"/>
<path d="M334.8 421.8 L334.8 429.1" stroke="#ffffff" stroke-width="0.9" fill="none"/>
<path d="M337.0 421.8 L337.0 429.1" stroke="#ffffff" stroke-width="0.9" fill="none"/>
<path d="M339.2 421.8 L339.2 429.1" stroke="#ffffff" stroke-width="0.9" fill="none"/>
<path d="M341.4 421.8 L341.4 429.1" stroke="#ffffff" stroke-width="0.9" fill="none"/>
<path d="M343.7 421.8 L343.7 429.1" stroke="#ffffff" stroke-width="0.9" fill="none"/>
<path d="M345.9 421.8 L345.9 429.1" stroke="#ffffff" stroke-width="0.9" fill="none"/>
<path d="M348.1 421.8 L348.1 429.1" stroke="#ffffff" stroke-width="0.9" fill="none"/>
<path d="M350.4 421.8 L350.4 429.1" stroke="#ffffff" stroke-width="0.9" fill="none"/>
<path d="M323.6 425.5 L352.6 425.5" stroke="#ffffff" stroke-width="0.9" fill="none"/>
<text transform="translate(359.0 437.0)" font-size="4.6" fill="#ffffff" text-anchor="middle" font-family='"Liberation Sans","Noto Sans CJK SC",sans-serif' font-weight="bold">卧室</text>
<path d="M330.5 438.5 L353.2 438.5 L353.2 466.0 L330.5 466.0 Z" stroke="#ffffff" stroke-width="1.2" fill="none"/>
<path d="M331.5 445.0 L337.5 449.5 L351.5 440.0" stroke="#ffffff" stroke-width="0.9" fill="none"/>
<path d="M331.5 445.0 L346.0 441.5" stroke="#ffffff" stroke-width="0.8" fill="none"/>
<path d="M322.8 460.6 L330.0 460.6 L330.0 466.0 L322.8 466.0 Z" stroke="#ffffff" stroke-width="0.9" fill="none"/>
<path d="M353.5 460.6 L361.0 460.6 L361.0 466.0 L353.5 466.0 Z" stroke="#ffffff" stroke-width="0.9" fill="none"/>
<path d="M327.7 463.3 L327.3 464.2 L326.4 464.6 L325.5 464.2 L325.1 463.3 L325.5 462.4 L326.4 462.0 L327.3 462.4 Z" stroke="#ffffff" stroke-width="0.8" fill="none"/>
<path d="M358.5 463.3 L358.1 464.2 L357.2 464.6 L356.3 464.2 L355.9 463.3 L356.3 462.4 L357.2 462.0 L358.1 462.4 Z" stroke="#ffffff" stroke-width="0.8" fill="none"/>
<path d="M340.8 463.4 L340.3 464.3 L338.9 464.9 L337.1 464.9 L335.7 464.3 L335.2 463.4 L335.7 462.5 L337.1 461.9 L338.9 461.9 L340.3 462.5 Z" stroke="#ffffff" stroke-width="0.9" fill="none"/>
<path d="M346.8 463.4 L346.3 464.3 L344.9 464.9 L343.1 464.9 L341.7 464.3 L341.2 463.4 L341.7 462.5 L343.1 461.9 L344.9 461.9 L346.3 462.5 Z" stroke="#ffffff" stroke-width="0.9" fill="none"/>
<path d="M399.9 367.9 L399.5 370.2 L398.4 372.4 L396.8 374.0 L394.6 375.1 L392.3 375.5 L390.0 375.1 L387.8 374.0 L386.2 372.4 L385.1 370.2 L384.7 367.9 L385.1 365.6 L386.2 363.4 L387.8 361.8 L390.0 360.7 L392.3 360.3 L394.6 360.7 L396.8 361.8 L398.4 363.4 L399.5 365.6 Z" stroke="#ffffff" stroke-width="1.2" fill="none"/>
<path d="M389.4 357.7 L389.4 352.9 L395.2 352.9 L395.2 357.7 Z" stroke="#ffffff" stroke-width="1.2" fill="none"/>
<path d="M389.1 351.9 L395.5 351.9" stroke="#ffffff" stroke-width="1.2" fill="none"/>
<path d="M399.7 360.3 L403.8 357.9 L406.7 362.9 L402.6 365.3 Z" stroke="#ffffff" stroke-width="1.2" fill="none"/>
<path d="M404.6 357.1 L407.8 362.7" stroke="#ffffff" stroke-width="1.2" fill="none"/>
<path d="M402.6 370.5 L406.7 372.9 L403.8 377.9 L399.7 375.5 Z" stroke="#ffffff" stroke-width="1.2" fill="none"/>
<path d="M407.8 373.1 L404.6 378.7" stroke="#ffffff" stroke-width="1.2" fill="none"/>
<path d="M395.2 378.1 L395.2 382.9 L389.4 382.9 L389.4 378.1 Z" stroke="#ffffff" stroke-width="1.2" fill="none"/>
<path d="M395.5 383.9 L389.1 383.9" stroke="#ffffff" stroke-width="1.2" fill="none"/>
<path d="M384.9 375.5 L380.8 377.9 L377.9 372.9 L382.0 370.5 Z" stroke="#ffffff" stroke-width="1.2" fill="none"/>
<path d="M380.0 378.7 L376.8 373.1" stroke="#ffffff" stroke-width="1.2" fill="none"/>
<path d="M382.0 365.3 L377.9 362.9 L380.8 357.9 L384.9 360.3 Z" stroke="#ffffff" stroke-width="1.2" fill="none"/>
<path d="M376.8 362.7 L380.0 357.1" stroke="#ffffff" stroke-width="1.2" fill="none"/>
<text transform="translate(392.3 369.7)" font-size="4.6" fill="#ffffff" text-anchor="middle" font-family='"Liberation Sans","Noto Sans CJK SC",sans-serif' font-weight="bold">餐厅</text>
<path d="M373.0 413.5 L376.6 413.2 L380.1 412.4 L383.7 411.2 L387.2 409.8 L390.8 408.1 L394.3 406.4 L397.9 404.6 L401.5 402.8 L405.0 401.1 L408.6 399.7 L412.1 398.4 L415.7 397.5 L419.2 397.0 L422.8 396.8" stroke="#ffffff" stroke-width="1.4" fill="none"/>
<path d="M422.8 396.8 L436.6 396.8 L436.6 409.8 L422.8 409.8 Z" stroke="#ffffff" stroke-width="1.2" fill="none"/>
<path d="M422.8 400.0 L436.6 400.0" stroke="#ffffff" stroke-width="0.9" fill="none"/>
<path d="M422.8 403.3 L436.6 403.3" stroke="#ffffff" stroke-width="0.9" fill="none"/>
<path d="M422.8 406.6 L436.6 406.6" stroke="#ffffff" stroke-width="0.9" fill="none"/>
<path d="M380.6 418.6 L379.6 419.8 L379.4 421.4 L377.8 421.6 L376.6 422.6 L375.4 421.6 L373.8 421.4 L373.6 419.8 L372.6 418.6 L373.6 417.4 L373.8 415.8 L375.4 415.6 L376.6 414.6 L377.8 415.6 L379.4 415.8 L379.6 417.4 Z" stroke="#ffffff" stroke-width="1.5" fill="none"/>
<path d="M378.3 418.6 L377.8 419.8 L376.6 420.3 L375.4 419.8 L374.9 418.6 L375.4 417.4 L376.6 416.9 L377.8 417.4 Z" stroke="#ffffff" stroke-width="0.8" fill="none"/>
<path d="M380.6 462.0 L379.6 463.2 L379.4 464.8 L377.8 465.0 L376.6 466.0 L375.4 465.0 L373.8 464.8 L373.6 463.2 L372.6 462.0 L373.6 460.8 L373.8 459.2 L375.4 459.0 L376.6 458.0 L377.8 459.0 L379.4 459.2 L379.6 460.8 Z" stroke="#ffffff" stroke-width="1.5" fill="none"/>
<path d="M378.3 462.0 L377.8 463.2 L376.6 463.7 L375.4 463.2 L374.9 462.0 L375.4 460.8 L376.6 460.3 L377.8 460.8 Z" stroke="#ffffff" stroke-width="0.8" fill="none"/>
<path d="M392.1 415.9 L403.3 415.9 L404.9 417.5 L404.9 425.7 L403.3 427.3 L392.1 427.3 L390.5 425.7 L390.5 417.5 Z" stroke="#ffffff" stroke-width="1.2" fill="none"/>
<path d="M393.9 417.9 L393.9 426.1" stroke="#ffffff" stroke-width="1.0" fill="none"/>
<path d="M401.5 417.9 L401.5 426.1" stroke="#ffffff" stroke-width="1.0" fill="none"/>
<path d="M391.5 417.9 L403.9 417.9" stroke="#ffffff" stroke-width="1.0" fill="none"/>
<path d="M396.9 419.8 L396.9 424.3" stroke="#ffffff" stroke-width="0.8" fill="none"/>
<path d="M398.9 419.8 L398.9 424.3" stroke="#ffffff" stroke-width="0.8" fill="none"/>
<path d="M395.1 421.9 L400.3 421.9" stroke="#ffffff" stroke-width="0.8" fill="none"/>
<path d="M392.1 454.8 L403.6 454.8 L405.2 456.4 L405.2 463.6 L403.6 465.2 L392.1 465.2 L390.5 463.6 L390.5 456.4 Z" stroke="#ffffff" stroke-width="1.2" fill="none"/>
<path d="M393.9 456.8 L393.9 464.0" stroke="#ffffff" stroke-width="1.0" fill="none"/>
<path d="M401.8 456.8 L401.8 464.0" stroke="#ffffff" stroke-width="1.0" fill="none"/>
<path d="M391.5 456.8 L404.2 456.8" stroke="#ffffff" stroke-width="1.0" fill="none"/>
<path d="M397.1 458.7 L397.1 462.2" stroke="#ffffff" stroke-width="0.8" fill="none"/>
<path d="M399.1 458.7 L399.1 462.2" stroke="#ffffff" stroke-width="0.8" fill="none"/>
<path d="M395.1 460.3 L400.6 460.3" stroke="#ffffff" stroke-width="0.8" fill="none"/>
<path d="M374.8 426.5 L383.4 426.5 L385.0 428.1 L385.0 453.4 L383.4 455.0 L374.8 455.0 L373.2 453.4 L373.2 428.1 Z" stroke="#ffffff" stroke-width="1.2" fill="none"/>
<path d="M375.6 427.7 L375.6 453.8" stroke="#ffffff" stroke-width="1.0" fill="none"/>
<path d="M376.8 429.7 L383.6 429.7" stroke="#ffffff" stroke-width="0.9" fill="none"/>
<path d="M376.8 451.8 L383.6 451.8" stroke="#ffffff" stroke-width="0.9" fill="none"/>
<path d="M376.8 437.2 L383.6 437.2" stroke="#ffffff" stroke-width="0.9" fill="none"/>
<path d="M377.6 432.1 L382.8 432.1" stroke="#ffffff" stroke-width="0.7" fill="none"/>
<path d="M377.6 433.9 L382.8 433.9" stroke="#ffffff" stroke-width="0.7" fill="none"/>
<path d="M377.6 435.7 L382.8 435.7" stroke="#ffffff" stroke-width="0.7" fill="none"/>
<path d="M376.8 444.3 L383.6 444.3" stroke="#ffffff" stroke-width="0.9" fill="none"/>
<path d="M377.6 439.3 L382.8 439.3" stroke="#ffffff" stroke-width="0.7" fill="none"/>
<path d="M377.6 441.1 L382.8 441.1" stroke="#ffffff" stroke-width="0.7" fill="none"/>
<path d="M377.6 442.9 L382.8 442.9" stroke="#ffffff" stroke-width="0.7" fill="none"/>
<path d="M376.8 451.5 L383.6 451.5" stroke="#ffffff" stroke-width="0.9" fill="none"/>
<path d="M377.6 446.5 L382.8 446.5" stroke="#ffffff" stroke-width="0.7" fill="none"/>
<path d="M377.6 448.3 L382.8 448.3" stroke="#ffffff" stroke-width="0.7" fill="none"/>
<path d="M377.6 450.1 L382.8 450.1" stroke="#ffffff" stroke-width="0.7" fill="none"/>
<path d="M393.7 432.6 L400.1 432.6 L401.5 434.0 L401.5 446.6 L400.1 448.0 L393.7 448.0 L392.3 446.6 L392.3 434.0 Z" stroke="#ffffff" stroke-width="1.4" fill="none"/>
<path d="M394.5 443.5 L398.7 438.1" stroke="#ffffff" stroke-width="1.0" fill="none"/>
<path d="M394.5 440.0 L397.5 436.6" stroke="#ffffff" stroke-width="0.9" fill="none"/>
<path d="M396.3 445.0 L399.1 441.1" stroke="#ffffff" stroke-width="0.9" fill="none"/>
<path d="M396.4 437.7 L396.4 436.7 L396.9 435.9 L397.9 435.6 L398.9 435.9 L399.4 436.7 L399.4 437.7" stroke="#ffffff" stroke-width="0.8" fill="none"/>
<text transform="translate(416.3 423.0)" font-size="4.6" fill="#ffffff" text-anchor="middle" font-family='"Liberation Sans","Noto Sans CJK SC",sans-serif' font-weight="bold">客厅</text>
<path d="M426.5 425.5 L436.6 425.5 L436.6 459.7 L426.5 459.7 Z" stroke="#ffffff" stroke-width="1.2" fill="none"/>
<path d="M428.6 437.7 L433.8 437.7 L433.8 442.9 L428.6 442.9 Z" stroke="#ffffff" stroke-width="1.2" fill="none"/>
<path d="M428.6 438.8 L425.7 435.8" stroke="#ffffff" stroke-width="0.9" fill="none"/>
<path d="M428.6 441.8 L425.7 444.8" stroke="#ffffff" stroke-width="0.9" fill="none"/>
<path d="M432.2 437.7 L433.5 438.0 L434.5 439.0 L434.8 440.3 L434.5 441.6 L433.5 442.6 L432.2 442.9" stroke="#ffffff" stroke-width="0.8" fill="none"/>
<path d="M370.5 466.2 L370.5 491.0 L438.0 491.0 L438.0 466.2" stroke="#ff1030" stroke-width="1.3" fill="none"/>
<path d="M371.6 467.8 L437.2 467.8 L437.2 489.6 L371.6 489.6 Z" stroke="#ffff00" stroke-width="1.3" fill="none"/>
<path d="M372.5 468.2 L436.5 468.2" stroke="#ffff00" stroke-width="1.2" fill="none"/>
<path d="M437.5 394.0 L437.5 466.4" stroke="#22d6d6" stroke-width="1.2" fill="none"/>
<path d="M439.7 394.0 L439.7 466.4" stroke="#22d6d6" stroke-width="1.2" fill="none"/>
<path d="M437.5 394.0 L441.0 394.0" stroke="#22d6d6" stroke-width="1.2" fill="none"/>
<path d="M445.8 327.0 L445.8 373.8" stroke="#22d6d6" stroke-width="1.2" fill="none"/>
<path d="M448.0 327.0 L448.0 336.0" stroke="#22d6d6" stroke-width="1.2" fill="none"/>
<path d="M448.0 347.5 L448.0 361.0" stroke="#22d6d6" stroke-width="1.2" fill="none"/>
<path d="M445.8 373.8 L448.2 373.8" stroke="#22d6d6" stroke-width="1.2" fill="none"/>
<path d="M444.9 326.8 L444.9 347.0" stroke="#22d6d6" stroke-width="1.2" fill="none"/>
<path d="M493.2 328.2 L493.2 469.6 L483.5 469.6 L483.5 477.4 L445.7 477.4 L445.7 469.6 L438.0 469.6" stroke="#ff1030" stroke-width="1.25" fill="none"/>
<path d="M448.3 469.6 L448.3 475.6 L480.0 475.6 L480.0 469.6" stroke="#ffff00" stroke-width="1.2" fill="none"/>
<path d="M439.7 467.2 L490.6 467.2 L490.6 417.0" stroke="#22d6d6" stroke-width="1.2" fill="none"/>
<path d="M493.2 328.2 L567.7 328.2" stroke="#ff1030" stroke-width="1.3" fill="none"/>
<path d="M460.2 329.0 L489.8 329.0 L489.8 339.5 L460.2 339.5 Z" stroke="#ffffff" stroke-width="1.2" fill="none"/>
<path d="M462.0 330.5 L466.0 334.2 L462.0 338.0" stroke="#ffffff" stroke-width="0.9" fill="none"/>
<path d="M463.5 329.0 L463.5 339.5" stroke="#ffffff" stroke-width="0.8" fill="none"/>
<path d="M487.9 334.2 L487.6 336.1 L486.9 337.2 L485.9 337.2 L485.2 336.1 L484.9 334.2 L485.2 332.3 L485.9 331.2 L486.9 331.2 L487.6 332.3 Z" stroke="#ffffff" stroke-width="0.9" fill="none"/>
<text transform="translate(453.8 336.0)" font-size="4.4" fill="#ffffff" text-anchor="middle" font-family='"Liberation Sans","Noto Sans CJK SC",sans-serif' font-weight="bold">工人房</text>
<path d="M448.0 327.8 L493.0 327.8" stroke="#22d6d6" stroke-width="1.2" fill="none"/>
<path d="M458.8 347.7 L491.0 347.7 L491.0 373.2 L457.8 373.2" stroke="#22d6d6" stroke-width="1.2" fill="none"/>
<path d="M458.8 345.6 L491.0 345.6" stroke="#22d6d6" stroke-width="1.2" fill="none"/>
<path d="M459.8 349.6 L467.4 349.6 L467.4 357.6 L459.8 357.6 Z" stroke="#ffffff" stroke-width="1.2" fill="none"/>
<path d="M459.8 353.4 L467.4 353.4" stroke="#ffffff" stroke-width="0.9" fill="none"/>
<path d="M460.5 350.0 L463.6 353.0 L466.7 350.0" stroke="#ffffff" stroke-width="0.8" fill="none"/>
<path d="M469.6 349.6 L481.0 349.6 L481.0 356.8 L469.6 356.8 Z" stroke="#ff1030" stroke-width="1" fill="#ff1030"/>
<path d="M471.5 351.2 L479.0 351.2 L479.0 355.2 L471.5 355.2 Z" stroke="#600" stroke-width="0.8" fill="none"/>
<path d="M482.2 359.8 L489.6 359.8 L489.6 369.8 L482.2 369.8 Z" stroke="#ff1030" stroke-width="1.2" fill="none"/>
<path d="M483.6 361.0 L488.2 361.0 L488.2 368.6 L483.6 368.6 Z" stroke="#ffffff" stroke-width="0.9" fill="none"/>
<path d="M483.6 364.8 L488.2 364.8" stroke="#ff1030" stroke-width="1.0" fill="none"/>
<text transform="translate(467.0 366.6)" font-size="4.8" fill="#ffffff" text-anchor="middle" font-family='"Liberation Sans","Noto Sans CJK SC",sans-serif' font-weight="bold">厨房</text>
<path d="M491.4 345.0 L491.4 375.0" stroke="#1010ff" stroke-width="1.4" fill="none"/>
<path d="M450.1 338.6 L451.3 338.9 L452.4 339.4 L453.5 340.0 L454.5 340.8 L455.4 341.7 L456.1 342.7 L456.7 343.8 L457.2 345.0 L457.4 346.2 L457.5 347.5" stroke="#1010ff" stroke-width="1.2" fill="none"/>
<path d="M449.3 362.5 L450.7 362.8 L452.1 363.2 L453.3 363.8 L454.5 364.6 L455.5 365.6 L456.4 366.7 L457.1 367.9 L457.6 369.2 L457.9 370.6 L458.0 372.0" stroke="#1010ff" stroke-width="1.2" fill="none"/>
<path d="M457.8 373.2 L457.8 417.0" stroke="#22d6d6" stroke-width="1.2" fill="none"/>
<path d="M460.0 375.2 L460.0 393.0" stroke="#22d6d6" stroke-width="1.2" fill="none"/>
<path d="M458.0 375.2 L491.0 375.2" stroke="#22d6d6" stroke-width="1.2" fill="none"/>
<path d="M466.8 378.6 L466.3 380.2 L464.9 381.3 L463.1 381.3 L461.7 380.2 L461.2 378.6 L461.7 377.0 L463.1 375.9 L464.9 375.9 L466.3 377.0 Z" stroke="#ffffff" stroke-width="1.1" fill="none"/>
<path d="M460.6 382.6 L467.8 382.6" stroke="#ff1030" stroke-width="1.6" fill="none"/>
<path d="M476.8 375.7 L476.8 377.7 L471.2 377.7 L471.2 375.7 Z" stroke="#ffffff" stroke-width="1.2" fill="none"/>
<path d="M476.4 377.7 L476.4 381.0 L476.1 382.7 L475.2 383.9 L474.0 384.4 L472.8 383.9 L471.9 382.7 L471.6 381.0 L471.6 377.7 Z" stroke="#ffffff" stroke-width="1.2" fill="none"/>
<path d="M479.8 376.4 L489.0 376.4 L489.0 393.2 L479.8 393.2 Z" stroke="#ff1030" stroke-width="1.7" fill="none"/>
<path d="M482.2 380.2 L484.4 378.2 L486.6 380.2" stroke="#ff1030" stroke-width="0.8" fill="none"/>
<path d="M484.4 390.6 L484.4 392.4" stroke="#ff1030" stroke-width="1.0" fill="none"/>
<path d="M491.4 376.0 L491.4 395.0" stroke="#1010ff" stroke-width="1.6" fill="none"/>
<path d="M471.7 395.3 L491.0 395.3" stroke="#22d6d6" stroke-width="1.2" fill="none"/>
<path d="M471.7 397.2 L491.0 397.2" stroke="#22d6d6" stroke-width="1.2" fill="none"/>
<path d="M461.8 385.0 L463.2 385.3 L464.6 385.7 L465.8 386.3 L467.0 387.1 L468.0 388.1 L468.9 389.2 L469.6 390.4 L470.1 391.7 L470.4 393.1 L470.5 394.5" stroke="#1010ff" stroke-width="1.2" fill="none"/>
<path d="M459.7 397.2 L459.7 416.0 L491.0 416.0" stroke="#22d6d6" stroke-width="1.2" fill="none"/>
<path d="M471.7 397.2 L471.7 399.0" stroke="#22d6d6" stroke-width="1.2" fill="none"/>
<path d="M459.7 418.0 L491.0 418.0" stroke="#22d6d6" stroke-width="1.2" fill="none"/>
<text transform="translate(473.5 408.6)" font-size="4.4" fill="#ffffff" text-anchor="middle" font-family='"Liberation Sans","Noto Sans CJK SC",sans-serif' font-weight="bold">衣帽间</text>
<path d="M461.8 406.5 L463.1 406.7 L464.4 407.1 L465.6 407.7 L466.7 408.4 L467.7 409.3 L468.6 410.3 L469.3 411.4 L469.9 412.6 L470.3 413.9 L470.5 415.2" stroke="#1010ff" stroke-width="1.2" fill="none"/>
<path d="M451.5 395.5 L451.2 397.3 L450.6 399.0 L449.8 400.6 L448.8 402.1 L447.6 403.3 L446.2 404.4 L444.7 405.3 L443.0 406.0 L441.3 406.4 L439.5 406.5" stroke="#1010ff" stroke-width="1.3" fill="none"/>
<path d="M439.7 394.5 L457.8 394.5" stroke="#22d6d6" stroke-width="0.9" fill="none"/>
<path d="M446.8 422.0 L445.9 423.1 L445.7 424.5 L444.3 424.7 L443.2 425.6 L442.1 424.7 L440.7 424.5 L440.5 423.1 L439.6 422.0 L440.5 420.9 L440.7 419.5 L442.1 419.3 L443.2 418.4 L444.3 419.3 L445.7 419.5 L445.9 420.9 Z" stroke="#ffffff" stroke-width="1.5" fill="none"/>
<path d="M444.7 422.0 L444.3 423.1 L443.2 423.5 L442.1 423.1 L441.7 422.0 L442.1 420.9 L443.2 420.5 L444.3 420.9 Z" stroke="#ffffff" stroke-width="0.8" fill="none"/>
<path d="M439.7 420.0 L446.8 420.0 L446.8 450.5 L439.7 450.5 Z" stroke="#ffffff" stroke-width="1.2" fill="none"/>
<path d="M441.0 436.0 L446.2 436.0 L446.2 441.2 L441.0 441.2 Z" stroke="#ffffff" stroke-width="1.2" fill="none"/>
<path d="M446.2 437.1 L449.1 434.1" stroke="#ffffff" stroke-width="0.9" fill="none"/>
<path d="M446.2 440.1 L449.1 443.1" stroke="#ffffff" stroke-width="0.9" fill="none"/>
<path d="M442.6 441.2 L441.3 440.9 L440.3 439.9 L440.0 438.6 L440.3 437.3 L441.3 436.3 L442.6 436.0" stroke="#ffffff" stroke-width="0.8" fill="none"/>
<path d="M448.2 456.0 L453.6 456.0 L453.6 462.0 L448.2 462.0 Z" stroke="#ffffff" stroke-width="1.2" fill="none"/>
<path d="M454.8 455.2 L454.8 462.8" stroke="#ffffff" stroke-width="1.0" fill="none"/>
<text transform="translate(462.5 427.0)" font-size="4.4" fill="#ffffff" text-anchor="middle" font-family='"Liberation Sans","Noto Sans CJK SC",sans-serif' font-weight="bold">主卧室</text>
<path d="M459.8 431.6 L489.6 431.6 L489.6 453.5 L459.8 453.5 Z" stroke="#ffffff" stroke-width="1.2" fill="none"/>
<path d="M461.0 452.0 L466.0 436.0 L470.5 442.5 L461.0 452.0" stroke="#ffffff" stroke-width="0.9" fill="none"/>
<path d="M466.0 436.0 L464.0 433.0" stroke="#ffffff" stroke-width="0.8" fill="none"/>
<path d="M487.9 442.6 L487.7 444.4 L487.1 445.7 L486.2 446.2 L485.3 445.7 L484.7 444.4 L484.5 442.6 L484.7 440.8 L485.3 439.5 L486.2 439.0 L487.1 439.5 L487.7 440.8 Z" stroke="#ffffff" stroke-width="0.9" fill="none"/>
<path d="M482.6 424.4 L489.8 424.4 L489.8 430.8 L482.6 430.8 Z" stroke="#ffffff" stroke-width="0.9" fill="none"/>
<path d="M482.6 454.2 L489.8 454.2 L489.8 460.8 L482.6 460.8 Z" stroke="#ffffff" stroke-width="0.9" fill="none"/>
<path d="M484.2 427.6 L488.2 427.6" stroke="#ffffff" stroke-width="0.8" fill="none"/>
<path d="M486.2 425.6 L486.2 429.6" stroke="#ffffff" stroke-width="0.8" fill="none"/>
<path d="M484.2 457.5 L488.2 457.5" stroke="#ffffff" stroke-width="0.8" fill="none"/>
<path d="M486.2 455.5 L486.2 459.5" stroke="#ffffff" stroke-width="0.8" fill="none"/>
<path d="M232.0 210.8 L209.3 237.4 L176.8 212.5 L173.6 216.3 L168.0 212.0 L145.1 238.9 L150.4 242.9 L141.5 253.3 L136.2 249.3 L113.6 276.0 L119.6 280.6 L112.6 287.3 L216.0 366.7 L221.3 360.4 L226.6 364.5 L249.5 337.5 L244.0 333.2 L249.8 326.7" stroke="#ff1030" stroke-width="1.2" fill="none"/>
<path d="M172.1 217.4 L168.3 214.5 L147.7 238.6 L151.5 241.5" stroke="#ffff00" stroke-width="1.2" fill="none"/>
<path d="M173.9 218.8 L159.5 235.7" stroke="#ffff00" stroke-width="1.1" fill="none"/>
<path d="M140.3 254.7 L136.5 251.8 L116.2 275.7 L120.0 278.6" stroke="#ffff00" stroke-width="1.2" fill="none"/>
<path d="M142.1 256.1 L121.8 280.0" stroke="#ffff00" stroke-width="1.1" fill="none"/>
<path d="M243.0 335.0 L246.8 337.9 L226.3 362.0 L222.5 359.1" stroke="#ffff00" stroke-width="1.2" fill="none"/>
<path d="M241.1 333.5 L220.6 357.6" stroke="#ffff00" stroke-width="1.1" fill="none"/>
<path d="M177.0 215.6 L208.8 240.0" stroke="#22d6d6" stroke-width="1.2" fill="none"/>
<path d="M177.0 215.6 L174.1 219.0" stroke="#22d6d6" stroke-width="1.2" fill="none"/>
<path d="M116.0 286.9 L160.5 321.0" stroke="#22d6d6" stroke-width="1.2" fill="none"/>
<path d="M163.0 323.0 L215.7 363.4" stroke="#22d6d6" stroke-width="1.2" fill="none"/>
<path d="M120.4 281.8 L116.0 286.9" stroke="#22d6d6" stroke-width="1.2" fill="none"/>
<path d="M220.3 357.9 L215.7 363.4" stroke="#22d6d6" stroke-width="1.2" fill="none"/>
<path d="M148.6 247.9 L179.3 271.5 L193.0 255.4" stroke="#22d6d6" stroke-width="1.2" fill="none"/>
<path d="M147.1 249.6 L179.7 274.6 L194.9 256.8" stroke="#22d6d6" stroke-width="1.2" fill="none"/>
<path d="M193.0 255.4 L194.9 256.8" stroke="#22d6d6" stroke-width="1.2" fill="none"/>
<path d="M205.3 268.3 L160.5 321.0" stroke="#22d6d6" stroke-width="1.2" fill="none"/>
<path d="M207.8 270.3 L163.0 323.0" stroke="#22d6d6" stroke-width="1.2" fill="none"/>
<path d="M205.3 268.3 L207.8 270.3" stroke="#22d6d6" stroke-width="1.2" fill="none"/>
<path d="M208.6 292.2 L251.1 324.9" stroke="#22d6d6" stroke-width="1.2" fill="none"/>
<path d="M207.0 294.1 L249.5 326.7" stroke="#22d6d6" stroke-width="1.2" fill="none"/>
<path d="M208.6 292.2 L207.0 294.1" stroke="#22d6d6" stroke-width="1.2" fill="none"/>
<path d="M184.0 221.0 L166.3 241.7" stroke="#ffffff" stroke-width="0.9" fill="none"/>
<path d="M159.2 238.0 L181.8 255.3 L173.0 265.7 L150.4 248.4 Z" stroke="#ffffff" stroke-width="1.2" fill="none"/>
<path d="M159.2 239.3 L160.6 247.6 L151.7 248.1" stroke="#ffffff" stroke-width="0.9" fill="none"/>
<path d="M160.6 247.6 L154.8 243.2" stroke="#ffffff" stroke-width="0.8" fill="none"/>
<path d="M176.0 259.4 L174.5 260.9 L173.0 261.7 L171.9 261.6 L171.6 260.7 L172.1 259.1 L173.3 257.4 L174.9 255.9 L176.4 255.1 L177.4 255.2 L177.7 256.2 L177.2 257.7 Z" stroke="#ffffff" stroke-width="0.9" fill="none"/>
<path d="M178.9 232.5 L183.8 236.2 L179.7 241.1 L174.8 237.3 Z" stroke="#ffffff" stroke-width="1.2" fill="none"/>
<path d="M178.5 230.8 L173.0 237.2" stroke="#ffffff" stroke-width="1.0" fill="none"/>
<text transform="translate(179.8 248.2)" font-size="4.6" fill="#ffffff" text-anchor="middle" font-family='"Liberation Sans","Noto Sans CJK SC",sans-serif' font-weight="bold">卧室</text>
<path d="M190.4 226.9 L206.6 239.4 L203.2 243.3 L187.1 230.9 Z" stroke="#ffffff" stroke-width="0.9" fill="none"/>
<path d="M192.5 228.5 L189.1 232.5" stroke="#ffffff" stroke-width="0.9" fill="none"/>
<path d="M194.5 230.0 L191.1 234.0" stroke="#ffffff" stroke-width="0.9" fill="none"/>
<path d="M196.5 231.6 L193.1 235.6" stroke="#ffffff" stroke-width="0.9" fill="none"/>
<path d="M198.5 233.2 L195.2 237.1" stroke="#ffffff" stroke-width="0.9" fill="none"/>
<path d="M200.5 234.7 L197.2 238.7" stroke="#ffffff" stroke-width="0.9" fill="none"/>
<path d="M202.6 236.3 L199.2 240.2" stroke="#ffffff" stroke-width="0.9" fill="none"/>
<path d="M204.6 237.8 L201.2 241.8" stroke="#ffffff" stroke-width="0.9" fill="none"/>
<path d="M194.0 240.8 L193.1 242.0 L192.4 243.3 L191.9 244.8 L191.6 246.2 L191.5 247.7 L191.6 249.2 L191.9 250.7 L192.5 252.1 L193.3 253.4 L194.2 254.6" stroke="#ffff00" stroke-width="1.25" fill="none"/>
<path d="M194.0 240.8 L202.7 247.5" stroke="#ffff00" stroke-width="1.0" fill="none"/>
<path d="M195.7 257.8 L194.5 259.6 L193.5 261.5 L192.9 263.6 L192.6 265.7 L192.7 267.8 L193.1 269.9 L193.9 271.9 L195.0 273.7 L196.4 275.4 L198.1 276.8" stroke="#ffff00" stroke-width="1.25" fill="none"/>
<path d="M205.0 266.8 L197.2 276.0" stroke="#ffff00" stroke-width="1.2" fill="none"/>
<path d="M202.1 279.8 L203.6 280.8 L205.3 281.6 L207.1 282.1 L208.9 282.3 L210.8 282.2 L212.6 281.9 L214.4 281.3 L216.0 280.4 L217.5 279.3 L218.8 278.0" stroke="#ffff00" stroke-width="1.25" fill="none"/>
<path d="M209.1 271.7 L202.2 279.9" stroke="#ffff00" stroke-width="1.2" fill="none"/>
<path d="M154.3 255.1 L172.5 269.1 L154.1 290.7 L135.9 276.7 Z" stroke="#ffffff" stroke-width="1.2" fill="none"/>
<path d="M150.1 260.0 L168.4 274.0" stroke="#ffffff" stroke-width="0.9" fill="none"/>
<path d="M138.0 276.5 L153.4 273.8 L153.5 288.4" stroke="#ffffff" stroke-width="0.9" fill="none"/>
<path d="M153.4 273.8 L145.0 283.7" stroke="#ffffff" stroke-width="0.8" fill="none"/>
<path d="M159.7 263.3 L158.7 263.7 L157.1 263.2 L155.6 262.1 L154.8 260.7 L155.0 259.7 L156.0 259.3 L157.6 259.8 L159.1 260.9 L159.9 262.3 Z" stroke="#ffffff" stroke-width="0.9" fill="none"/>
<path d="M167.3 269.1 L166.2 269.5 L164.6 269.0 L163.2 267.9 L162.4 266.5 L162.5 265.4 L163.6 265.1 L165.1 265.5 L166.6 266.7 L167.4 268.0 Z" stroke="#ffffff" stroke-width="0.9" fill="none"/>
<path d="M147.9 250.4 L153.7 254.9 L149.7 259.7 L143.9 255.2 Z" stroke="#ffffff" stroke-width="0.9" fill="none"/>
<path d="M150.0 256.0 L149.0 256.5 L147.8 256.2 L147.3 255.2 L147.6 254.1 L148.6 253.6 L149.8 253.9 L150.3 254.9 Z" stroke="#ffffff" stroke-width="0.8" fill="none"/>
<path d="M172.8 269.6 L178.3 273.8 L174.3 278.5 L168.8 274.3 Z" stroke="#ffffff" stroke-width="0.9" fill="none"/>
<path d="M174.7 275.0 L173.7 275.5 L172.6 275.2 L172.0 274.2 L172.4 273.1 L173.4 272.6 L174.5 272.9 L175.1 273.9 Z" stroke="#ffffff" stroke-width="0.8" fill="none"/>
<text transform="translate(162.0 290.5)" font-size="4.6" fill="#ffffff" text-anchor="middle" font-family='"Liberation Sans","Noto Sans CJK SC",sans-serif' font-weight="bold">卧室</text>
<path d="M162.7 299.3 L167.1 302.7 L163.4 307.1 L158.9 303.7 Z" stroke="#ff1030" stroke-width="1.5" fill="none"/>
<path d="M145.5 302.5 L143.5 303.8 L141.1 303.7 L139.2 302.2 L138.6 300.0 L139.5 297.9 L141.5 296.6 L143.9 296.7 L145.8 298.2 L146.4 300.4 Z" stroke="#ffffff" stroke-width="1.3" fill="none"/>
<path d="M144.1 301.4 L142.7 302.1 L141.2 301.7 L140.5 300.4 L140.9 299.0 L142.3 298.3 L143.8 298.7 L144.5 300.0 Z" stroke="#ffffff" stroke-width="0.9" fill="none"/>
<path d="M120.5 282.6 L137.5 295.6 L133.9 299.9 L116.9 286.8 Z" stroke="#ffffff" stroke-width="0.9" fill="none"/>
<path d="M122.6 284.2 L119.0 288.5" stroke="#ffffff" stroke-width="0.9" fill="none"/>
<path d="M124.8 285.8 L121.1 290.1" stroke="#ffffff" stroke-width="0.9" fill="none"/>
<path d="M126.9 287.5 L123.3 291.7" stroke="#ffffff" stroke-width="0.9" fill="none"/>
<path d="M129.0 289.1 L125.4 293.3" stroke="#ffffff" stroke-width="0.9" fill="none"/>
<path d="M131.1 290.7 L127.5 295.0" stroke="#ffffff" stroke-width="0.9" fill="none"/>
<path d="M133.2 292.3 L129.6 296.6" stroke="#ffffff" stroke-width="0.9" fill="none"/>
<path d="M135.4 294.0 L131.7 298.2" stroke="#ffffff" stroke-width="0.9" fill="none"/>
<path d="M145.1 309.0 L150.3 302.9 L165.5 314.5" stroke="#ffffff" stroke-width="1.2" fill="none"/>
<path d="M205.9 294.7 L247.0 326.3 L243.8 330.1 L202.7 298.5 Z" stroke="#ffffff" stroke-width="1.2" fill="none"/>
<path d="M219.7 305.3 L216.5 309.1" stroke="#ffffff" stroke-width="0.9" fill="none"/>
<path d="M226.1 310.2 L222.8 314.0" stroke="#ffffff" stroke-width="0.9" fill="none"/>
<path d="M202.7 298.5 L207.0 301.8 L204.6 304.6 L200.3 301.3 Z" stroke="#ffffff" stroke-width="0.9" fill="none"/>
<path d="M202.9 304.5 L207.3 307.9 L203.8 312.0 L199.4 308.6 Z" stroke="#ffffff" stroke-width="1.2" fill="none"/>
<path d="M202.4 303.1 L197.9 308.5" stroke="#ffffff" stroke-width="1.0" fill="none"/>
<path d="M228.9 314.9 L233.2 318.2 L229.7 322.3 L225.4 319.0 Z" stroke="#ffffff" stroke-width="1.2" fill="none"/>
<path d="M228.6 313.4 L230.1 323.9" stroke="#ffffff" stroke-width="0.9" fill="none"/>
<path d="M234.9 318.3 L223.8 319.0" stroke="#ffffff" stroke-width="0.9" fill="none"/>
<path d="M190.2 309.8 L188.2 311.2 L185.8 311.5 L183.5 310.5 L182.1 308.7 L181.9 306.4 L182.9 304.2 L184.9 302.9 L187.3 302.6 L189.5 303.5 L190.9 305.4 L191.2 307.7 Z" stroke="#ffffff" stroke-width="1.4" fill="none"/>
<path d="M182.1 316.9 L180.5 317.9 L178.5 317.8 L177.0 316.6 L176.5 314.8 L177.2 313.1 L178.8 312.1 L180.8 312.1 L182.3 313.3 L182.8 315.1 Z" stroke="#ffffff" stroke-width="1.2" fill="none"/>
<path d="M178.9 327.9 L176.9 329.2 L174.5 329.5 L172.3 328.6 L170.8 326.7 L170.6 324.4 L171.6 322.3 L173.6 320.9 L176.0 320.6 L178.2 321.6 L179.7 323.4 L179.9 325.7 Z" stroke="#ffffff" stroke-width="1.4" fill="none"/>
<path d="M186.6 334.3 L184.6 335.6 L182.2 335.5 L180.4 334.0 L179.7 331.8 L180.6 329.7 L182.6 328.4 L185.0 328.5 L186.9 330.0 L187.5 332.2 Z" stroke="#ffffff" stroke-width="1.3" fill="none"/>
<path d="M185.2 333.2 L183.8 333.9 L182.3 333.5 L181.6 332.2 L182.0 330.8 L183.4 330.1 L184.9 330.5 L185.7 331.8 Z" stroke="#ffffff" stroke-width="0.9" fill="none"/>
<text transform="translate(193.9 322.5)" font-size="4.4" fill="#ffffff" text-anchor="middle" font-family='"Liberation Sans","Noto Sans CJK SC",sans-serif' font-weight="bold">主卧室</text>
<path d="M209.3 323.7 L227.2 337.5 L209.5 358.4 L191.5 344.6 Z" stroke="#ffffff" stroke-width="1.2" fill="none"/>
<path d="M195.7 339.7 L213.6 353.5" stroke="#ffffff" stroke-width="0.9" fill="none"/>
<path d="M210.0 326.0 L210.1 340.6 L224.7 337.4" stroke="#ffffff" stroke-width="0.9" fill="none"/>
<path d="M210.1 340.6 L218.4 330.7" stroke="#ffffff" stroke-width="0.8" fill="none"/>
<path d="M201.1 348.0 L200.1 348.3 L198.5 347.9 L197.0 346.7 L196.2 345.4 L196.4 344.3 L197.4 343.9 L199.0 344.4 L200.5 345.5 L201.3 346.9 Z" stroke="#ffffff" stroke-width="0.9" fill="none"/>
<path d="M208.7 353.7 L207.6 354.1 L206.0 353.6 L204.6 352.5 L203.8 351.2 L203.9 350.1 L205.0 349.7 L206.5 350.2 L208.0 351.3 L208.8 352.7 Z" stroke="#ffffff" stroke-width="0.9" fill="none"/>
<path d="M190.3 336.1 L195.1 339.8 L191.2 344.4 L186.5 340.7 Z" stroke="#ffffff" stroke-width="0.9" fill="none"/>
<path d="M192.0 341.2 L190.9 341.7 L189.8 341.4 L189.2 340.4 L189.6 339.3 L190.6 338.8 L191.7 339.1 L192.3 340.1 Z" stroke="#ffffff" stroke-width="0.8" fill="none"/>
<path d="M213.7 354.0 L218.4 357.7 L214.5 362.3 L209.8 358.6 Z" stroke="#ffffff" stroke-width="0.9" fill="none"/>
<path d="M215.3 359.1 L214.3 359.6 L213.1 359.3 L212.6 358.3 L212.9 357.2 L213.9 356.7 L215.1 357.0 L215.6 358.0 Z" stroke="#ffffff" stroke-width="0.8" fill="none"/>
<path d="M216.9 284.0 L218.2 285.2 L219.3 286.6 L220.2 288.1 L220.8 289.7 L221.1 291.5 L221.2 293.2 L220.9 294.9 L220.4 296.6 L219.6 298.2 L218.5 299.6" stroke="#1010ff" stroke-width="1.3" fill="none"/>
<path d="M231.8 296.5 L233.1 297.6 L234.1 298.9 L234.9 300.3 L235.5 301.8 L235.8 303.4 L235.8 305.0 L235.6 306.6 L235.1 308.2 L234.3 309.7 L233.4 311.0" stroke="#1010ff" stroke-width="1.3" fill="none"/>
<path d="M209.0 292.6 L218.4 299.8" stroke="#1010ff" stroke-width="1.6" fill="none"/>
<path d="M584.0 210.8 L606.7 237.4 L639.2 212.5 L642.4 216.3 L648.0 212.0 L670.9 238.9 L665.6 242.9 L674.5 253.3 L679.8 249.3 L702.4 276.0 L696.4 280.6 L703.4 287.3 L600.0 366.7 L594.7 360.4 L589.4 364.5 L566.5 337.5 L572.0 333.2 L566.2 326.7" stroke="#ff1030" stroke-width="1.2" fill="none"/>
<path d="M643.9 217.4 L647.7 214.5 L668.3 238.6 L664.5 241.5" stroke="#ffff00" stroke-width="1.2" fill="none"/>
<path d="M642.1 218.8 L656.5 235.7" stroke="#ffff00" stroke-width="1.1" fill="none"/>
<path d="M675.7 254.7 L679.5 251.8 L699.8 275.7 L696.0 278.6" stroke="#ffff00" stroke-width="1.2" fill="none"/>
<path d="M673.9 256.1 L694.2 280.0" stroke="#ffff00" stroke-width="1.1" fill="none"/>
<path d="M573.0 335.0 L569.2 337.9 L589.7 362.0 L593.5 359.1" stroke="#ffff00" stroke-width="1.2" fill="none"/>
<path d="M574.9 333.5 L595.4 357.6" stroke="#ffff00" stroke-width="1.1" fill="none"/>
<path d="M639.0 215.6 L607.2 240.0" stroke="#22d6d6" stroke-width="1.2" fill="none"/>
<path d="M639.0 215.6 L641.9 219.0" stroke="#22d6d6" stroke-width="1.2" fill="none"/>
<path d="M700.0 286.9 L655.5 321.0" stroke="#22d6d6" stroke-width="1.2" fill="none"/>
<path d="M653.0 323.0 L600.3 363.4" stroke="#22d6d6" stroke-width="1.2" fill="none"/>
<path d="M695.6 281.8 L700.0 286.9" stroke="#22d6d6" stroke-width="1.2" fill="none"/>
<path d="M595.7 357.9 L600.3 363.4" stroke="#22d6d6" stroke-width="1.2" fill="none"/>
<path d="M667.4 247.9 L636.7 271.5 L623.0 255.4" stroke="#22d6d6" stroke-width="1.2" fill="none"/>
<path d="M668.9 249.6 L636.3 274.6 L621.1 256.8" stroke="#22d6d6" stroke-width="1.2" fill="none"/>
<path d="M623.0 255.4 L621.1 256.8" stroke="#22d6d6" stroke-width="1.2" fill="none"/>
<path d="M610.7 268.3 L655.5 321.0" stroke="#22d6d6" stroke-width="1.2" fill="none"/>
<path d="M608.2 270.3 L653.0 323.0" stroke="#22d6d6" stroke-width="1.2" fill="none"/>
<path d="M610.7 268.3 L608.2 270.3" stroke="#22d6d6" stroke-width="1.2" fill="none"/>
<path d="M607.4 292.2 L564.9 324.9" stroke="#22d6d6" stroke-width="1.2" fill="none"/>
<path d="M609.0 294.1 L566.5 326.7" stroke="#22d6d6" stroke-width="1.2" fill="none"/>
<path d="M607.4 292.2 L609.0 294.1" stroke="#22d6d6" stroke-width="1.2" fill="none"/>
<path d="M632.0 221.0 L649.7 241.7" stroke="#ffffff" stroke-width="0.9" fill="none"/>
<path d="M656.8 238.0 L634.2 255.3 L643.0 265.7 L665.6 248.4 Z" stroke="#ffffff" stroke-width="1.2" fill="none"/>
<path d="M656.8 239.3 L655.4 247.6 L664.3 248.1" stroke="#ffffff" stroke-width="0.9" fill="none"/>
<path d="M655.4 247.6 L661.2 243.2" stroke="#ffffff" stroke-width="0.8" fill="none"/>
<path d="M640.0 259.4 L641.5 260.9 L643.0 261.7 L644.1 261.6 L644.4 260.7 L643.9 259.1 L642.7 257.4 L641.1 255.9 L639.6 255.1 L638.6 255.2 L638.3 256.2 L638.8 257.7 Z" stroke="#ffffff" stroke-width="0.9" fill="none"/>
<path d="M637.1 232.5 L632.2 236.2 L636.3 241.1 L641.2 237.3 Z" stroke="#ffffff" stroke-width="1.2" fill="none"/>
<path d="M637.5 230.8 L643.0 237.2" stroke="#ffffff" stroke-width="1.0" fill="none"/>
<text transform="translate(633.2 248.2)" font-size="4.6" fill="#ffffff" text-anchor="middle" font-family='"Liberation Sans","Noto Sans CJK SC",sans-serif' font-weight="bold">卧室</text>
<path d="M625.6 226.9 L609.4 239.4 L612.8 243.3 L628.9 230.9 Z" stroke="#ffffff" stroke-width="0.9" fill="none"/>
<path d="M623.5 228.5 L626.9 232.5" stroke="#ffffff" stroke-width="0.9" fill="none"/>
<path d="M621.5 230.0 L624.9 234.0" stroke="#ffffff" stroke-width="0.9" fill="none"/>
<path d="M619.5 231.6 L622.9 235.6" stroke="#ffffff" stroke-width="0.9" fill="none"/>
<path d="M617.5 233.2 L620.8 237.1" stroke="#ffffff" stroke-width="0.9" fill="none"/>
<path d="M615.5 234.7 L618.8 238.7" stroke="#ffffff" stroke-width="0.9" fill="none"/>
<path d="M613.4 236.3 L616.8 240.2" stroke="#ffffff" stroke-width="0.9" fill="none"/>
<path d="M611.4 237.8 L614.8 241.8" stroke="#ffffff" stroke-width="0.9" fill="none"/>
<path d="M622.0 240.8 L622.9 242.0 L623.6 243.3 L624.1 244.8 L624.4 246.2 L624.5 247.7 L624.4 249.2 L624.1 250.7 L623.5 252.1 L622.7 253.4 L621.8 254.6" stroke="#ffff00" stroke-width="1.25" fill="none"/>
<path d="M622.0 240.8 L613.3 247.5" stroke="#ffff00" stroke-width="1.0" fill="none"/>
<path d="M620.3 257.8 L621.5 259.6 L622.5 261.5 L623.1 263.6 L623.4 265.7 L623.3 267.8 L622.9 269.9 L622.1 271.9 L621.0 273.7 L619.6 275.4 L617.9 276.8" stroke="#ffff00" stroke-width="1.25" fill="none"/>
<path d="M611.0 266.8 L618.8 276.0" stroke="#ffff00" stroke-width="1.2" fill="none"/>
<path d="M613.9 279.8 L612.4 280.8 L610.7 281.6 L608.9 282.1 L607.1 282.3 L605.2 282.2 L603.4 281.9 L601.6 281.3 L600.0 280.4 L598.5 279.3 L597.2 278.0" stroke="#ffff00" stroke-width="1.25" fill="none"/>
<path d="M606.9 271.7 L613.8 279.9" stroke="#ffff00" stroke-width="1.2" fill="none"/>
<path d="M661.7 255.1 L643.5 269.1 L661.9 290.7 L680.1 276.7 Z" stroke="#ffffff" stroke-width="1.2" fill="none"/>
<path d="M665.9 260.0 L647.6 274.0" stroke="#ffffff" stroke-width="0.9" fill="none"/>
<path d="M678.0 276.5 L662.6 273.8 L662.5 288.4" stroke="#ffffff" stroke-width="0.9" fill="none"/>
<path d="M662.6 273.8 L671.0 283.7" stroke="#ffffff" stroke-width="0.8" fill="none"/>
<path d="M656.3 263.3 L657.3 263.7 L658.9 263.2 L660.4 262.1 L661.2 260.7 L661.0 259.7 L660.0 259.3 L658.4 259.8 L656.9 260.9 L656.1 262.3 Z" stroke="#ffffff" stroke-width="0.9" fill="none"/>
<path d="M648.7 269.1 L649.8 269.5 L651.4 269.0 L652.8 267.9 L653.6 266.5 L653.5 265.4 L652.4 265.1 L650.9 265.5 L649.4 266.7 L648.6 268.0 Z" stroke="#ffffff" stroke-width="0.9" fill="none"/>
<path d="M668.1 250.4 L662.3 254.9 L666.3 259.7 L672.1 255.2 Z" stroke="#ffffff" stroke-width="0.9" fill="none"/>
<path d="M666.0 256.0 L667.0 256.5 L668.2 256.2 L668.7 255.2 L668.4 254.1 L667.4 253.6 L666.2 253.9 L665.7 254.9 Z" stroke="#ffffff" stroke-width="0.8" fill="none"/>
<path d="M643.2 269.6 L637.7 273.8 L641.7 278.5 L647.2 274.3 Z" stroke="#ffffff" stroke-width="0.9" fill="none"/>
<path d="M641.3 275.0 L642.3 275.5 L643.4 275.2 L644.0 274.2 L643.6 273.1 L642.6 272.6 L641.5 272.9 L640.9 273.9 Z" stroke="#ffffff" stroke-width="0.8" fill="none"/>
<text transform="translate(651.0 290.5)" font-size="4.6" fill="#ffffff" text-anchor="middle" font-family='"Liberation Sans","Noto Sans CJK SC",sans-serif' font-weight="bold">卧室</text>
<path d="M653.3 299.3 L648.9 302.7 L652.6 307.1 L657.1 303.7 Z" stroke="#ff1030" stroke-width="1.5" fill="none"/>
<path d="M670.5 302.5 L672.5 303.8 L674.9 303.7 L676.8 302.2 L677.4 300.0 L676.5 297.9 L674.5 296.6 L672.1 296.7 L670.2 298.2 L669.6 300.4 Z" stroke="#ffffff" stroke-width="1.3" fill="none"/>
<path d="M671.9 301.4 L673.3 302.1 L674.8 301.7 L675.5 300.4 L675.1 299.0 L673.7 298.3 L672.2 298.7 L671.5 300.0 Z" stroke="#ffffff" stroke-width="0.9" fill="none"/>
<path d="M695.5 282.6 L678.5 295.6 L682.1 299.9 L699.1 286.8 Z" stroke="#ffffff" stroke-width="0.9" fill="none"/>
<path d="M693.4 284.2 L697.0 288.5" stroke="#ffffff" stroke-width="0.9" fill="none"/>
<path d="M691.2 285.8 L694.9 290.1" stroke="#ffffff" stroke-width="0.9" fill="none"/>
<path d="M689.1 287.5 L692.7 291.7" stroke="#ffffff" stroke-width="0.9" fill="none"/>
<path d="M687.0 289.1 L690.6 293.3" stroke="#ffffff" stroke-width="0.9" fill="none"/>
<path d="M684.9 290.7 L688.5 295.0" stroke="#ffffff" stroke-width="0.9" fill="none"/>
<path d="M682.8 292.3 L686.4 296.6" stroke="#ffffff" stroke-width="0.9" fill="none"/>
<path d="M680.6 294.0 L684.3 298.2" stroke="#ffffff" stroke-width="0.9" fill="none"/>
<path d="M670.9 309.0 L665.7 302.9 L650.5 314.5" stroke="#ffffff" stroke-width="1.2" fill="none"/>
<path d="M610.1 294.7 L569.0 326.3 L572.2 330.1 L613.3 298.5 Z" stroke="#ffffff" stroke-width="1.2" fill="none"/>
<path d="M596.3 305.3 L599.5 309.1" stroke="#ffffff" stroke-width="0.9" fill="none"/>
<path d="M589.9 310.2 L593.2 314.0" stroke="#ffffff" stroke-width="0.9" fill="none"/>
<path d="M613.3 298.5 L609.0 301.8 L611.4 304.6 L615.7 301.3 Z" stroke="#ffffff" stroke-width="0.9" fill="none"/>
<path d="M613.1 304.5 L608.7 307.9 L612.2 312.0 L616.6 308.6 Z" stroke="#ffffff" stroke-width="1.2" fill="none"/>
<path d="M613.6 303.1 L618.1 308.5" stroke="#ffffff" stroke-width="1.0" fill="none"/>
<path d="M587.1 314.9 L582.8 318.2 L586.3 322.3 L590.6 319.0 Z" stroke="#ffffff" stroke-width="1.2" fill="none"/>
<path d="M587.4 313.4 L585.9 323.9" stroke="#ffffff" stroke-width="0.9" fill="none"/>
<path d="M581.1 318.3 L592.2 319.0" stroke="#ffffff" stroke-width="0.9" fill="none"/>
<path d="M625.8 309.8 L627.8 311.2 L630.2 311.5 L632.5 310.5 L633.9 308.7 L634.1 306.4 L633.1 304.2 L631.1 302.9 L628.7 302.6 L626.5 303.5 L625.1 305.4 L624.8 307.7 Z" stroke="#ffffff" stroke-width="1.4" fill="none"/>
<path d="M633.9 316.9 L635.5 317.9 L637.5 317.8 L639.0 316.6 L639.5 314.8 L638.8 313.1 L637.2 312.1 L635.2 312.1 L633.7 313.3 L633.2 315.1 Z" stroke="#ffffff" stroke-width="1.2" fill="none"/>
<path d="M637.1 327.9 L639.1 329.2 L641.5 329.5 L643.7 328.6 L645.2 326.7 L645.4 324.4 L644.4 322.3 L642.4 320.9 L640.0 320.6 L637.8 321.6 L636.3 323.4 L636.1 325.7 Z" stroke="#ffffff" stroke-width="1.4" fill="none"/>
<path d="M629.4 334.3 L631.4 335.6 L633.8 335.5 L635.6 334.0 L636.3 331.8 L635.4 329.7 L633.4 328.4 L631.0 328.5 L629.1 330.0 L628.5 332.2 Z" stroke="#ffffff" stroke-width="1.3" fill="none"/>
<path d="M630.8 333.2 L632.2 333.9 L633.7 333.5 L634.4 332.2 L634.0 330.8 L632.6 330.1 L631.1 330.5 L630.3 331.8 Z" stroke="#ffffff" stroke-width="0.9" fill="none"/>
<text transform="translate(619.1 322.5)" font-size="4.4" fill="#ffffff" text-anchor="middle" font-family='"Liberation Sans","Noto Sans CJK SC",sans-serif' font-weight="bold">主卧室</text>
<path d="M606.7 323.7 L588.8 337.5 L606.5 358.4 L624.5 344.6 Z" stroke="#ffffff" stroke-width="1.2" fill="none"/>
<path d="M620.3 339.7 L602.4 353.5" stroke="#ffffff" stroke-width="0.9" fill="none"/>
<path d="M606.0 326.0 L605.9 340.6 L591.3 337.4" stroke="#ffffff" stroke-width="0.9" fill="none"/>
<path d="M605.9 340.6 L597.6 330.7" stroke="#ffffff" stroke-width="0.8" fill="none"/>
<path d="M614.9 348.0 L615.9 348.3 L617.5 347.9 L619.0 346.7 L619.8 345.4 L619.6 344.3 L618.6 343.9 L617.0 344.4 L615.5 345.5 L614.7 346.9 Z" stroke="#ffffff" stroke-width="0.9" fill="none"/>
<path d="M607.3 353.7 L608.4 354.1 L610.0 353.6 L611.4 352.5 L612.2 351.2 L612.1 350.1 L611.0 349.7 L609.5 350.2 L608.0 351.3 L607.2 352.7 Z" stroke="#ffffff" stroke-width="0.9" fill="none"/>
<path d="M625.7 336.1 L620.9 339.8 L624.8 344.4 L629.5 340.7 Z" stroke="#ffffff" stroke-width="0.9" fill="none"/>
<path d="M624.0 341.2 L625.1 341.7 L626.2 341.4 L626.8 340.4 L626.4 339.3 L625.4 338.8 L624.3 339.1 L623.7 340.1 Z" stroke="#ffffff" stroke-width="0.8" fill="none"/>
<path d="M602.3 354.0 L597.6 357.7 L601.5 362.3 L606.2 358.6 Z" stroke="#ffffff" stroke-width="0.9" fill="none"/>
<path d="M600.7 359.1 L601.7 359.6 L602.9 359.3 L603.4 358.3 L603.1 357.2 L602.1 356.7 L600.9 357.0 L600.4 358.0 Z" stroke="#ffffff" stroke-width="0.8" fill="none"/>
<path d="M599.1 284.0 L597.8 285.2 L596.7 286.6 L595.8 288.1 L595.2 289.7 L594.9 291.5 L594.8 293.2 L595.1 294.9 L595.6 296.6 L596.4 298.2 L597.5 299.6" stroke="#1010ff" stroke-width="1.3" fill="none"/>
<path d="M584.2 296.5 L582.9 297.6 L581.9 298.9 L581.1 300.3 L580.5 301.8 L580.2 303.4 L580.2 305.0 L580.4 306.6 L580.9 308.2 L581.7 309.7 L582.6 311.0" stroke="#1010ff" stroke-width="1.3" fill="none"/>
<path d="M607.0 292.6 L597.6 299.8" stroke="#1010ff" stroke-width="1.6" fill="none"/>
</svg>
  <div id="coord">-462011, 2437332, 0</div>
 </div>
 <div id="panel">
  <div id="phead"><span style="left:0;width:36px">可见</span><span style="left:36px;width:30px">颜色</span><span style="left:66px;width:67px">名称</span><i class="vs" style="left:35.5px"></i><i class="vs" style="left:66px"></i><i class="vs" style="left:133px"></i></div>
<div class="row" style="top:8.24px"><span class="cb"><svg viewBox="0 0 10 10" width="10" height="10"><path d="M2.3 5.2 L4.3 7.4 L7.8 2.6" fill="none" stroke="#fff" stroke-width="1.5" stroke-linecap="round" stroke-linejoin="round"/></svg></span><span class="sw" style="background:#ff0000"></span><span class="nm">WC</span></div>
<div class="row" style="top:24.76px"><span class="cb"><svg viewBox="0 0 10 10" width="10" height="10"><path d="M2.3 5.2 L4.3 7.4 L7.8 2.6" fill="none" stroke="#fff" stroke-width="1.5" stroke-linecap="round" stroke-linejoin="round"/></svg></span><span class="nm">TOILET</span></div>
<div class="row" style="top:41.28px"><span class="cb"><svg viewBox="0 0 10 10" width="10" height="10"><path d="M2.3 5.2 L4.3 7.4 L7.8 2.6" fill="none" stroke="#fff" stroke-width="1.5" stroke-linecap="round" stroke-linejoin="round"/></svg></span><span class="nm">DEFPOINTS</span></div>
<div class="row" style="top:57.80px"><span class="cb"><svg viewBox="0 0 10 10" width="10" height="10"><path d="M2.3 5.2 L4.3 7.4 L7.8 2.6" fill="none" stroke="#fff" stroke-width="1.5" stroke-linecap="round" stroke-linejoin="round"/></svg></span><span class="sw" style="background:#dc5a6b"></span><span class="nm">H</span></div>
<div class="row" style="top:74.32px"><span class="cb"><svg viewBox="0 0 10 10" width="10" height="10"><path d="M2.3 5.2 L4.3 7.4 L7.8 2.6" fill="none" stroke="#fff" stroke-width="1.5" stroke-linecap="round" stroke-linejoin="round"/></svg></span><span class="nm">OA_FURNITU...</span></div>
<div class="row" style="top:90.84px"><span class="cb"><svg viewBox="0 0 10 10" width="10" height="10"><path d="M2.3 5.2 L4.3 7.4 L7.8 2.6" fill="none" stroke="#fff" stroke-width="1.5" stroke-linecap="round" stroke-linejoin="round"/></svg></span><span class="nm">TOTHER</span></div>
<div class="row" style="top:107.36px"><span class="cb"><svg viewBox="0 0 10 10" width="10" height="10"><path d="M2.3 5.2 L4.3 7.4 L7.8 2.6" fill="none" stroke="#fff" stroke-width="1.5" stroke-linecap="round" stroke-linejoin="round"/></svg></span><span class="sw" style="background:#ff0000"></span><span class="nm">FURN</span></div>
<div class="row" style="top:123.88px"><span class="cb"><svg viewBox="0 0 10 10" width="10" height="10"><path d="M2.3 5.2 L4.3 7.4 L7.8 2.6" fill="none" stroke="#fff" stroke-width="1.5" stroke-linecap="round" stroke-linejoin="round"/></svg></span><span class="nm">PUB_TEXT</span></div>
<div class="row" style="top:140.40px"><span class="cb"><svg viewBox="0 0 10 10" width="10" height="10"><path d="M2.3 5.2 L4.3 7.4 L7.8 2.6" fill="none" stroke="#fff" stroke-width="1.5" stroke-linecap="round" stroke-linejoin="round"/></svg></span><span class="nm">WINDOW_TE...</span></div>
<div class="row" style="top:156.92px"><span class="cb"><svg viewBox="0 0 10 10" width="10" height="10"><path d="M2.3 5.2 L4.3 7.4 L7.8 2.6" fill="none" stroke="#fff" stroke-width="1.5" stroke-linecap="round" stroke-linejoin="round"/></svg></span><span class="sw" style="background:#00ff00"></span><span class="nm">AXIS</span></div>
<div class="row" style="top:173.44px"><span class="cb"><svg viewBox="0 0 10 10" width="10" height="10"><path d="M2.3 5.2 L4.3 7.4 L7.8 2.6" fill="none" stroke="#fff" stroke-width="1.5" stroke-linecap="round" stroke-linejoin="round"/></svg></span><span class="sw" style="background:#ffff00"></span><span class="nm">K</span></div>
<div class="row" style="top:189.96px"><span class="cb"><svg viewBox="0 0 10 10" width="10" height="10"><path d="M2.3 5.2 L4.3 7.4 L7.8 2.6" fill="none" stroke="#fff" stroke-width="1.5" stroke-linecap="round" stroke-linejoin="round"/></svg></span><span class="sw" style="background:#ffff00"></span><span class="nm">GROUND</span></div>
<div class="row" style="top:206.48px"><span class="cb"><svg viewBox="0 0 10 10" width="10" height="10"><path d="M2.3 5.2 L4.3 7.4 L7.8 2.6" fill="none" stroke="#fff" stroke-width="1.5" stroke-linecap="round" stroke-linejoin="round"/></svg></span><span class="nm">KEJIAN</span></div>
<div class="row" style="top:223.00px"><span class="cb"><svg viewBox="0 0 10 10" width="10" height="10"><path d="M2.3 5.2 L4.3 7.4 L7.8 2.6" fill="none" stroke="#fff" stroke-width="1.5" stroke-linecap="round" stroke-linejoin="round"/></svg></span><span class="sw" style="background:#ffff00"></span><span class="nm">BALCONY</span></div>
<div class="row" style="top:239.52px"><span class="cb"><svg viewBox="0 0 10 10" width="10" height="10"><path d="M2.3 5.2 L4.3 7.4 L7.8 2.6" fill="none" stroke="#fff" stroke-width="1.5" stroke-linecap="round" stroke-linejoin="round"/></svg></span><span class="sw" style="background:#ff0000"></span><span class="nm">面积线</span></div>
<div class="row" style="top:256.04px"><span class="cb"><svg viewBox="0 0 10 10" width="10" height="10"><path d="M2.3 5.2 L4.3 7.4 L7.8 2.6" fill="none" stroke="#fff" stroke-width="1.5" stroke-linecap="round" stroke-linejoin="round"/></svg></span><span class="nm">XL</span></div>
<div class="row" style="top:272.56px"><span class="cb"><svg viewBox="0 0 10 10" width="10" height="10"><path d="M2.3 5.2 L4.3 7.4 L7.8 2.6" fill="none" stroke="#fff" stroke-width="1.5" stroke-linecap="round" stroke-linejoin="round"/></svg></span><span class="sw" style="background:#ff00ff"></span><span class="nm">JJ</span></div>
<div class="row" style="top:289.08px"><span class="cb"><svg viewBox="0 0 10 10" width="10" height="10"><path d="M2.3 5.2 L4.3 7.4 L7.8 2.6" fill="none" stroke="#fff" stroke-width="1.5" stroke-linecap="round" stroke-linejoin="round"/></svg></span><span class="nm">COL</span></div>
<div class="row" style="top:305.60px"><span class="cb"><svg viewBox="0 0 10 10" width="10" height="10"><path d="M2.3 5.2 L4.3 7.4 L7.8 2.6" fill="none" stroke="#fff" stroke-width="1.5" stroke-linecap="round" stroke-linejoin="round"/></svg></span><span class="nm">DT</span></div>
<div class="row" style="top:322.12px"><span class="cb"><svg viewBox="0 0 10 10" width="10" height="10"><path d="M2.3 5.2 L4.3 7.4 L7.8 2.6" fill="none" stroke="#fff" stroke-width="1.5" stroke-linecap="round" stroke-linejoin="round"/></svg></span><span class="sw" style="background:#c0c0c0"></span><span class="nm">HATCH</span></div>
<div class="row" style="top:338.64px"><span class="cb"><svg viewBox="0 0 10 10" width="10" height="10"><path d="M2.3 5.2 L4.3 7.4 L7.8 2.6" fill="none" stroke="#fff" stroke-width="1.5" stroke-linecap="round" stroke-linejoin="round"/></svg></span><span class="sw" style="background:#ffff00"></span><span class="nm">ZXX</span></div>
<div class="row" style="top:355.16px"><span class="cb"><svg viewBox="0 0 10 10" width="10" height="10"><path d="M2.3 5.2 L4.3 7.4 L7.8 2.6" fill="none" stroke="#fff" stroke-width="1.5" stroke-linecap="round" stroke-linejoin="round"/></svg></span><span class="sw" style="background:#009900"></span><span class="nm">TREE</span></div>
<div class="row" style="top:371.68px"><span class="cb"><svg viewBox="0 0 10 10" width="10" height="10"><path d="M2.3 5.2 L4.3 7.4 L7.8 2.6" fill="none" stroke="#fff" stroke-width="1.5" stroke-linecap="round" stroke-linejoin="round"/></svg></span><span class="nm">TK</span></div>
<div class="row" style="top:388.20px"><span class="cb"><svg viewBox="0 0 10 10" width="10" height="10"><path d="M2.3 5.2 L4.3 7.4 L7.8 2.6" fill="none" stroke="#fff" stroke-width="1.5" stroke-linecap="round" stroke-linejoin="round"/></svg></span><span class="sw" style="background:#ff00ff"></span><span class="nm">LVTRY</span></div>
<div class="row" style="top:404.72px"><span class="cb"><svg viewBox="0 0 10 10" width="10" height="10"><path d="M2.3 5.2 L4.3 7.4 L7.8 2.6" fill="none" stroke="#fff" stroke-width="1.5" stroke-linecap="round" stroke-linejoin="round"/></svg></span><span class="nm">AXIS_TEXT</span></div>
<div class="row" style="top:421.24px"><span class="cb"><svg viewBox="0 0 10 10" width="10" height="10"><path d="M2.3 5.2 L4.3 7.4 L7.8 2.6" fill="none" stroke="#fff" stroke-width="1.5" stroke-linecap="round" stroke-linejoin="round"/></svg></span><span class="sw" style="background:#ff00ff"></span><span class="nm">INTERIOR</span></div>
<div class="row" style="top:437.76px"><span class="cb"><svg viewBox="0 0 10 10" width="10" height="10"><path d="M2.3 5.2 L4.3 7.4 L7.8 2.6" fill="none" stroke="#fff" stroke-width="1.5" stroke-linecap="round" stroke-linejoin="round"/></svg></span><span class="sw" style="background:#ff00ff"></span><span class="nm">X</span></div>
  <div id="trk"></div><div id="sb"></div>
 </div>
 <div id="tbar">
  <i class="tl" style="left:4.8px;background:#fc3d56"></i><i class="tl" style="left:18.7px;background:#fdb321"></i><i class="tl" style="left:32.6px;background:#1fc837"></i>
  <div id="title"><svg width="8" height="9" viewBox="0 0 8 9" style="position:absolute;left:-12px;top:1.2px"><path d="M0.5 0.5h5l2 2v6h-7z" fill="#fff" stroke="#ccc" stroke-width=".6"/><rect x="1.6" y="3" width="3.2" height="3.2" fill="#e8a21a"/><rect x="3.4" y="2.2" width="2.6" height="2.2" fill="#d4452f"/><rect x="1.8" y="5" width="2" height="1.6" fill="#4a9a3a"/></svg>多层小高等.dwg</div>
  <!--GROUPS-->
  <div class="grp" style="left:6px;width:33px"></div>
  <div class="grp" style="left:45.5px;width:34px"></div>
  <div class="grp" style="left:85.5px;width:30px"></div>
  <div class="grp" style="left:122.5px;width:65.5px"><i class="sep" style="left:32.5px"></i></div>
  <div class="grp" style="left:203px;width:129px"><i class="sep" style="left:32.5px"></i><i class="sep" style="left:64.5px"></i><i class="sep" style="left:96px"></i></div>
  <div class="grp" style="left:347px;width:66px"><i class="sep" style="left:33px"></i></div>
  <div class="grp" style="left:427.7px;width:97.7px"><i class="sep" style="left:32.8px"></i><i class="sep" style="left:64.8px"></i></div>
  <div class="grp" style="left:540px;width:66.2px"><i class="sep" style="left:33px"></i></div>
  <div class="grp" style="left:620.7px;width:161.3px"><i class="sep" style="left:32.5px"></i><i class="sep" style="left:64.7px"></i><i class="sep" style="left:97px"></i><i class="sep" style="left:129px"></i></div>
  <div class="grp" style="left:796.8px;width:30px"></div>
  <svg class="ic2" style="left:12.5px" width="20" height="15" viewBox="0 0 20 15"><path d="M4.6 3.4h3.2l1 1.2h4.4v1.2H4.6z" fill="#3d3d3d"/><path d="M3.9 5.6h10.8l-1 6.2H4.8z" fill="#f3c85f"/><path d="M4.6 5.6v6.2h.9z" fill="#d9a93c"/><path d="M10 3.2c1.2-1.3 2.8-1.5 4.2-.8" fill="none" stroke="#555" stroke-width=".8"/><path d="M13.4 1.2l1.6 1.3-1.9.9z" fill="#555"/></svg>
<svg class="ic2" style="left:48.3px" width="20" height="15" viewBox="0 0 20 15"><path d="M4.5 2.2h9.6l1.4 1.4v9H4.5z" fill="#1f8fd8"/><rect x="6.3" y="2.2" width="6.6" height="4.4" fill="#fff"/><rect x="6.6" y="8.6" width="6.8" height="4" fill="#2b3a48"/><rect x="10.6" y="9.6" width="1.8" height="2.2" fill="#dfe8ef"/><path d="M4.5 2.2h1v10.4h-1z" fill="#1679bd"/></svg>
<svg class="ic2" style="left:63.2px" width="20" height="15" viewBox="0 0 20 15"><path d="M7.6 6.6l2.4 2.3 2.4-2.3" fill="none" stroke="#4a4a4a" stroke-width="1.1" stroke-linecap="round" stroke-linejoin="round"/></svg>
<svg class="ic2" style="left:91.2px" width="20" height="15" viewBox="0 0 20 15"><rect x="6.6" y="1.6" width="6.8" height="3.6" fill="#fff" stroke="#333" stroke-width="1"/><path d="M4.2 5h11.6v5.6H4.2z" fill="#333"/><rect x="6.6" y="8" width="6.8" height="4.4" fill="#fff" stroke="#333" stroke-width="1"/><rect x="13.2" y="6" width="1.2" height="1" fill="#ddd"/></svg>
<svg class="ic2" style="left:129.1px" width="20" height="15" viewBox="0 0 20 15"><path d="M5 2.2h7l2.6 2.4v8.2H5z" fill="#e9194f"/><path d="M6.2 3.2h5.4l2 1.8v3.4H6.2z" fill="#fff"/><path d="M7 6h4" stroke="#1b6fc0" stroke-width="1"/><path d="M10.6 4.4l2.2 1.6-2.2 1.6z" fill="#1b6fc0"/><path d="M7.6 10.8h4.4" stroke="#fff" stroke-width=".9"/></svg>
<svg class="ic2" style="left:162.0px" width="20" height="15" viewBox="0 0 20 15"><rect x="5.6" y="2.4" width="8.8" height="10.2" fill="#fbfdfb" stroke="#cfe6cf" stroke-width=".7"/><path d="M7.2 5h4" stroke="#1b6fc0" stroke-width="1"/><path d="M10.8 3.4l2.2 1.6-2.2 1.6z" fill="#1b6fc0"/><path d="M6.4 11.8l2.6-2.8 1.6 1.6 1.2-1 1.8 2.2z" fill="#86c97a"/></svg>
<svg class="ic2" style="left:209.4px" width="20" height="15" viewBox="0 0 20 15"><path d="M10 1.6v11.4M4.3 7.3h11.4" stroke="#222" stroke-width="1.1"/><path d="M10 .8l2 2.4H8zM10 13.8l2-2.4H8zM3.5 7.3l2.4-2v4zM16.5 7.3l-2.4-2v4z" fill="#222"/><rect x="9" y="6.3" width="2" height="2" fill="#2d9be0"/></svg>
<svg class="ic2" style="left:241.3px" width="20" height="15" viewBox="0 0 20 15"><path d="M12.6 9.6l2.6 2.8" stroke="#222" stroke-width="1.7" stroke-linecap="round"/><circle cx="10" cy="6.5" r="4.2" fill="#c4e6f6" stroke="#4aa6dc" stroke-width=".9"/><path d="M10 4.6v3.6" stroke="#2d8fd0" stroke-width=".9"/><path d="M8.6 6l1.4-1.6L11.4 6z" fill="#2d8fd0"/></svg>
<svg class="ic2" style="left:273.3px" width="20" height="15" viewBox="0 0 20 15"><path d="M12.6 9.6l2.6 2.8" stroke="#222" stroke-width="1.7" stroke-linecap="round"/><circle cx="10" cy="6.5" r="4.2" fill="#c4e6f6" stroke="#4aa6dc" stroke-width=".9"/><rect x="7.8" y="5.2" width="4.4" height="2.8" fill="#e6f4fb" stroke="#2d8fd0" stroke-width=".8"/></svg>
<svg class="ic2" style="left:305.3px" width="20" height="15" viewBox="0 0 20 15"><path d="M12.6 9.6l2.6 2.8" stroke="#222" stroke-width="1.7" stroke-linecap="round"/><circle cx="10" cy="6.5" r="4.2" fill="#c4e6f6" stroke="#4aa6dc" stroke-width=".9"/><path d="M12.6 8.4c.6-2-.4-3.2-2.2-3.2" fill="none" stroke="#1f78c8" stroke-width="1.3"/><path d="M10.8 3.4L8.4 5.2l2.4 1.8z" fill="#1f78c8"/></svg>
<svg class="ic2" style="left:354.0px" width="20" height="15" viewBox="0 0 20 15"><path d="M7 5.4c3.6-.6 5.6 1.6 5 5.8" fill="none" stroke="#a9d0ea" stroke-width="1.7"/><path d="M8.6 2.6L5.2 5.6l4 2z" fill="#a9d0ea"/></svg>
<svg class="ic2" style="left:385.4px" width="20" height="15" viewBox="0 0 20 15"><path d="M13 5.4c-3.6-.6-5.6 1.6-5 5.8" fill="none" stroke="#a9d0ea" stroke-width="1.7"/><path d="M11.4 2.6l3.4 3-4 2z" fill="#a9d0ea"/></svg>
<svg class="ic2" style="left:434.6px" width="20" height="15" viewBox="0 0 20 15"><text x="10" y="12.3" font-size="14.5" text-anchor="middle" fill="#1a1a1a" font-family="Liberation Sans,sans-serif">A</text></svg>
<svg class="ic2" style="left:466.5px" width="20" height="15" viewBox="0 0 20 15"><rect x="4.5" y="2.2" width="11" height="10.4" fill="#fdc31d"/><path d="M7.4 4.6h5.8v4.4H9.8L8.6 10.4V9H7.4z" fill="#ecab0a"/></svg>
<svg class="ic2" style="left:498.3px" width="20" height="15" viewBox="0 0 20 15"><path d="M7 8.2l4.600-4.4c.5-.5 1.200-.5 1.700 0l.9.900c.5.500.5 1.200 0 1.700L11.600 11H8.600z" fill="#fbeef0" stroke="#eeb4bf" stroke-width=".8"/><path d="M5.600 12.400h9.400" stroke="#d9c4c8" stroke-width=".7"/></svg>
<svg class="ic2" style="left:547.0px" width="20" height="15" viewBox="0 0 20 15"><path d="M5 3.400v4.600M15.400 3.400v4.600" stroke="#222" stroke-width="1"/><path d="M5.600 5.700h9.200" stroke="#222" stroke-width=".9"/><path d="M5.200 5.700l2-1.200v2.400zM15.200 5.700l-2-1.200v2.400z" fill="#222"/><rect x="4.600" y="9.200" width="11.200" height="3.200" fill="#d98512"/><path d="M4.600 9.400h11.200" stroke="#8a5208" stroke-width=".8"/></svg>
<svg class="ic2" style="left:579.5px" width="20" height="15" viewBox="0 0 20 15"><path d="M4.600 2.400l10.800 3v3.400H4.600z" fill="#bfe0f4" stroke="#5c86a8" stroke-width=".7"/><rect x="4.300" y="9.200" width="11.400" height="3.200" fill="#d98512"/><path d="M4.300 9.400h11.400" stroke="#8a5208" stroke-width=".8"/></svg>
<svg class="ic2" style="left:628.0px" width="20" height="15" viewBox="0 0 20 15"><path d="M5 2.400v10M15.400 2.400v10M5 12h10.400" stroke="#2f8fdc" stroke-width="1" fill="none"/><path d="M5.600 4.800h9.200" stroke="#2f8fdc" stroke-width=".9"/><path d="M5.200 4.800l2-1.200v2.400zM15.200 4.800l-2-1.200v2.400z" fill="#2f8fdc"/></svg>
<svg class="ic2" style="left:660.3px" width="20" height="15" viewBox="0 0 20 15"><path d="M6 11l8.200-7.400" stroke="#2f8fdc" stroke-width="1"/><path d="M14.900 3l-.6 2.700-2-2.200zM5.300 11.600l.6-2.700 2 2.200z" fill="#2f8fdc"/><path d="M12.200 2.400l3.200 3.400M4.600 9.200l3.200 3.400" stroke="#2f8fdc" stroke-width=".7"/></svg>
<svg class="ic2" style="left:691.9px" width="20" height="15" viewBox="0 0 20 15"><circle cx="10" cy="7.200" r="5" fill="#cfcdf0" stroke="#3a55b8" stroke-width="1"/><path d="M10 7.200l3.400-3.400" stroke="#3a55b8" stroke-width="1"/></svg>
<svg class="ic2" style="left:722.8px" width="20" height="15" viewBox="0 0 20 15"><path d="M5.600 2v10.400h10" fill="none" stroke="#2a7fd0" stroke-width="1.100"/><path d="M5.600 3.600c4.800.4 8 3.600 8.400 8.800" fill="none" stroke="#2a7fd0" stroke-width="1.100"/><path d="M6 4l7.200 8" stroke="#9cc8ee" stroke-width=".6"/></svg>
<svg class="ic2" style="left:755.0px" width="20" height="15" viewBox="0 0 20 15"><path d="M5.600 11.800c3-.4 4.400-2 5.400-4.400s2.400-3 4-3.200" fill="none" stroke="#333" stroke-width="1"/><circle cx="5.800" cy="11.600" r="1.100" fill="#222"/><path d="M11.800 1.800v10.400M9 7.200h6" stroke="#4aa6e8" stroke-width=".8" stroke-dasharray="1.400 1"/></svg>
<svg class="ic2" style="left:801.8px" width="20" height="15" viewBox="0 0 20 15"><path d="M10 2.800l5.400 2.600L10 8 4.600 5.400z" fill="#d9eef2" stroke="#6fa8b4" stroke-width=".6"/><path d="M4.600 7.400L10 10l5.400-2.600v1.800L10 11.800 4.600 9.200z" fill="#333"/><path d="M6.400 6.400L10 8.200l3.600-1.800" fill="none" stroke="#8fc6d0" stroke-width=".6"/></svg>
  <!--LABELS-->
  <span class="lab" style="left:22.5px">打开</span><span class="lab" style="left:62px">保存</span><span class="lab" style="left:100.5px">打印</span><span class="lab" style="left:138.5px">转PDF</span><span class="lab" style="left:172px">图片</span>
  <span class="lab" style="left:219px">平移</span><span class="lab" style="left:251.5px">缩放</span><span class="lab" style="left:283.5px">区域</span><span class="lab" style="left:315.5px">全图</span>
  <span class="lab dis" style="left:363.5px">撤销</span><span class="lab dis" style="left:396.5px">重做</span>
  <span class="lab" style="left:444px">文本</span><span class="lab" style="left:476.5px">批注</span><span class="lab dis" style="left:508.5px">擦除</span>
  <span class="lab" style="left:556.5px">距离</span><span class="lab" style="left:589.5px">面积</span>
  <span class="lab" style="left:637px">线性</span><span class="lab" style="left:669px">相对</span><span class="lab" style="left:701.5px">半径</span><span class="lab" style="left:733.5px">角度</span><span class="lab" style="left:765.5px">坐标</span>
  <span class="lab" style="left:811.5px">图层</span>
 </div>
 <div id="tabs"><div id="tab1">多层小高等.dwg</div><div id="tab2">百余种住宅户形平面.dwg</div><div id="plus"><svg width="14" height="15" viewBox="0 0 14 15"><path d="M7 4v7M3.5 7.5h7" stroke="#666" stroke-width=".8" fill="none"/></svg></div></div>
</div>
</div>

</body></html>
